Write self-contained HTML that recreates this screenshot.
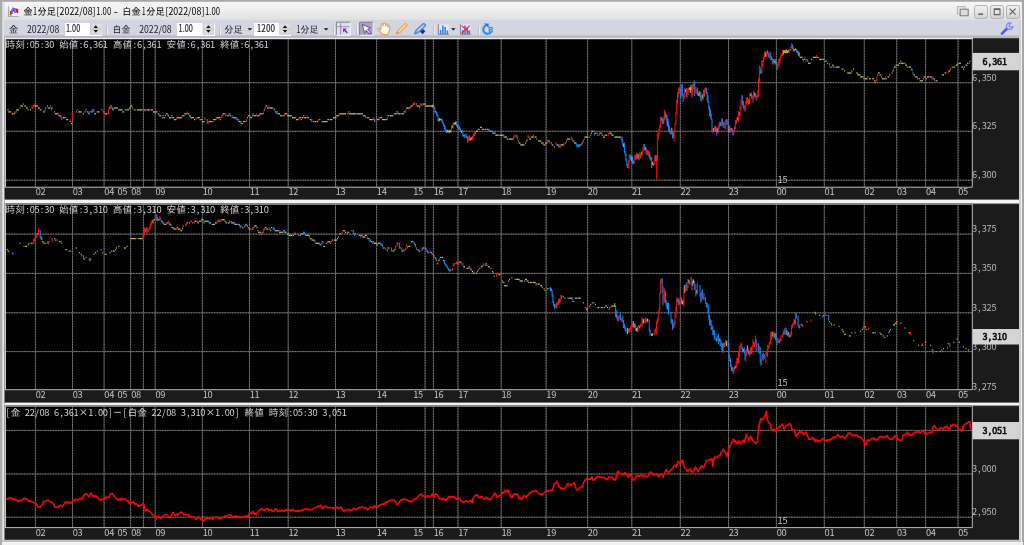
<!DOCTYPE html>
<html lang="ja"><head><meta charset="utf-8"><title>金1分足[2022/08]1.00 - 白金1分足[2022/08]1.00</title>
<style>
html,body{margin:0;padding:0;}
body{width:1024px;height:545px;overflow:hidden;position:relative;background:#f0f0f0;font-family:"Liberation Sans","IPAGothic","Noto Sans CJK JP",sans-serif;}
.abs{position:absolute;}
#frame-top{left:0;top:0;width:1024px;height:2.2px;background:linear-gradient(#a9a9ad,#a9a9ad 60%,#d8d8d8);}
#frame-left{left:0;top:0;width:1.8px;height:545px;background:#ababab;}
#frame-left2{left:1.8px;top:2px;width:2.8px;height:543px;background:linear-gradient(90deg,#c8c8c8,#e6e6e6 40%,#e2e2e2);}
#titlebar{left:1.8px;top:2.2px;width:1020px;height:18px;background:linear-gradient(#f6f6f6,#efefef 45%,#dfdfdf);}
#toolbar{left:4.4px;top:20.4px;width:1014.6px;height:15px;background:#d3d6e1;}
#toolbar-line{left:4.4px;top:35.2px;width:1014.6px;height:2.9px;background:linear-gradient(#c6c9d4,#a9acb8);}
.inp{position:absolute;top:22.8px;height:12.8px;background:#fff;}
.sep{position:absolute;top:25.6px;width:1.1px;height:9.2px;background:#f0f1f6;border-left:0.6px solid #bcc0cc;}
#frame-right{left:1019px;top:20px;width:2.2px;height:522px;background:#cfcfcf;}
#frame-right2{left:1021.2px;top:2px;width:1.4px;height:543px;background:#f2f2f2;}
#frame-right3{left:1022.4px;top:0;width:1.6px;height:545px;background:#a6a6a6;}
#frame-bottom{left:1.8px;top:539.8px;width:1019.6px;height:2.6px;background:#c2c2c2;}
#frame-bottom2{left:1.8px;top:542.4px;width:1020.8px;height:2.6px;background:#f2f2f2;}
.wbtn{position:absolute;top:4.7px;width:11.8px;height:12.4px;border:0.9px solid #b2b2b2;border-radius:2.4px;background:linear-gradient(#f0f0f0,#e4e4e4 50%,#d0d0d0);box-sizing:content-box;}

</style></head><body>
<div class="abs" id="frame-top"></div>
<div class="abs" id="titlebar"></div>
<div class="abs" id="frame-left"></div>
<div class="abs" id="frame-left2"></div>
<div class="abs" id="toolbar"></div>
<div class="abs" id="toolbar-line"></div>
<div class="inp" style="left:64.5px;width:37.5px"></div>
<div class="sep" style="left:105.8px"></div>
<div class="inp" style="left:177px;width:37.5px"></div>
<div class="sep" style="left:218.6px"></div>
<div class="inp" style="left:254px;width:37px"></div>
<div class="sep" style="left:333.2px"></div>
<div class="sep" style="left:355.8px"></div>
<div class="sep" style="left:433.2px"></div>
<div class="sep" style="left:478.2px"></div>
<div class="abs" id="frame-right"></div>
<div class="abs" id="frame-right2"></div>
<div class="abs" id="frame-right3"></div>
<div class="abs" id="frame-bottom"></div>
<div class="abs" id="frame-bottom2"></div>
<div class="wbtn" style="left:974px"></div>
<div class="wbtn" style="left:990px"></div>
<div class="wbtn" style="left:1005.8px"></div>
<!--ICONS-->

<svg width="1024" height="545" viewBox="0 0 1024 545" style="position:absolute;left:0;top:0;will-change:transform" font-family="IPAGothic, 'Liberation Mono', monospace" font-size="9.75">
<rect x="4.5" y="38.2" width="1014.5" height="501.6" fill="#1b1b1b"/>
<rect x="6.0" y="38.0" width="966.0" height="149.1" fill="#000"/>
<rect x="4.6" y="38.0" width="1.4" height="149.6" fill="#c6c6c6"/>
<path d="M35.4 38.0V187.2M72.5 38.0V187.2M104.1 38.0V187.2M130.6 38.0V187.2M143.4 38.0V187.2M155.2 38.0V187.2M202.4 38.0V187.2M249.5 38.0V187.2M288.2 38.0V187.2M335.5 38.0V187.2M376.6 38.0V187.2M425.1 38.0V187.2M433.4 38.0V187.2M458.0 38.0V187.2M501.2 38.0V187.2M546.1 38.0V187.2M587.6 38.0V187.2M631.8 38.0V187.2M680.3 38.0V187.2M728.5 38.0V187.2M776.4 38.0V187.2M824.3 38.0V187.2M864.3 38.0V187.2M896.7 38.0V187.2M925.6 38.0V187.2M958.0 38.0V187.2M6.0 82.7H972.0M6.0 131.3H972.0M6.0 180.2H972.0" stroke="#525252" stroke-width="0.85" fill="none"/>
<path d="M35.4 38.0V187.2M72.5 38.0V187.2M104.1 38.0V187.2M130.6 38.0V187.2M143.4 38.0V187.2M155.2 38.0V187.2M202.4 38.0V187.2M249.5 38.0V187.2M288.2 38.0V187.2M335.5 38.0V187.2M376.6 38.0V187.2M425.1 38.0V187.2M433.4 38.0V187.2M458.0 38.0V187.2M501.2 38.0V187.2M546.1 38.0V187.2M587.6 38.0V187.2M631.8 38.0V187.2M680.3 38.0V187.2M728.5 38.0V187.2M776.4 38.0V187.2M824.3 38.0V187.2M864.3 38.0V187.2M896.7 38.0V187.2M925.6 38.0V187.2M958.0 38.0V187.2M6.0 82.7H972.0M6.0 131.3H972.0M6.0 180.2H972.0" stroke="#868686" stroke-width="0.85" stroke-dasharray="1.3 1.3" fill="none"/>
<path d="M8.0 109.3v1.2M8.8 111.3v1.2M9.6 111.3v1.2M10.4 111.3v1.2M12.0 113.2v1.2M12.8 113.2v1.2M14.4 113.2v1.2M16.0 111.3v1.2M16.8 109.3v1.2M17.6 109.3v1.2M18.5 109.3v1.2M20.1 107.4v1.2M20.9 105.4v1.2M21.7 105.4v1.2M22.5 105.4v1.2M23.3 103.5v1.2M24.9 105.4v1.2M25.7 105.4v1.2M26.5 107.4v1.2M27.3 107.4v1.2M28.1 109.3v1.2M30.5 109.3v1.2M32.9 107.4v1.2M33.7 105.4v1.2M35.3 105.4v1.2M36.1 105.4v1.2M36.9 105.4v1.2M37.7 105.4v1.2M38.5 107.4v1.2M39.3 107.4v1.2M40.2 109.3v1.2M41.0 109.3v1.2M43.4 111.3v1.2M44.2 111.3v1.2M45.0 109.3v1.2M45.8 107.4v1.2M47.4 105.4v1.2M48.2 107.4v1.2M49.0 107.4v1.2M49.8 107.4v1.2M50.6 105.4v1.2M52.2 107.4v1.2M54.6 111.3v1.2M55.4 113.2v1.2M56.2 113.2v1.2M57.0 113.2v1.2M57.8 113.2v1.2M59.4 115.1v1.2M60.2 115.1v1.2M63.5 117.1v1.2M64.3 117.1v1.2M65.9 117.1v1.2M66.7 119.0v1.2M67.5 119.0v1.2M70.7 121.0v1.2M71.5 122.9v1.2M76.3 111.3v1.2M77.1 109.3v1.2M78.7 111.3v1.2M79.5 111.3v1.2M80.3 111.3v1.2M81.1 111.3v1.2M83.5 113.2v1.2M85.2 111.3v1.2M86.0 109.3v1.2M87.6 111.3v1.2M89.2 113.2v1.2M90.0 111.3v1.2M91.6 111.3v1.2M93.2 109.3v1.2M94.8 113.2v1.2M95.6 113.2v1.2M97.2 111.3v1.2M98.0 111.3v1.2M98.8 111.3v1.2M102.0 109.3v1.2M103.6 111.3v1.2M105.2 113.2v1.2M106.1 113.2v1.2M106.9 113.2v1.2M109.3 107.4v1.2M110.1 107.4v1.2M110.9 105.4v1.2M113.3 109.3v1.2M114.1 107.4v1.2M114.9 107.4v1.2M115.7 107.4v1.2M116.5 107.4v1.2M117.3 107.4v1.2M118.9 109.3v1.2M119.7 109.3v1.2M120.5 109.3v1.2M121.3 109.3v1.2M122.1 109.3v1.2M122.9 111.3v1.2M123.7 111.3v1.2M125.3 109.3v1.2M126.9 109.3v1.2M127.8 109.3v1.2M128.6 109.3v1.2M129.4 107.4v1.2M130.2 107.4v1.2M131.0 105.4v1.2M131.8 105.4v1.2M132.6 107.4v1.2M134.2 109.3v1.2M135.0 109.3v1.2M137.4 109.3v1.2M138.2 109.3v1.2M139.0 109.3v1.2M139.8 109.3v1.2M140.6 109.3v1.2M141.4 109.3v1.2M143.0 109.3v1.2M144.6 109.3v1.2M145.4 109.3v1.2M147.0 109.3v1.2M147.8 109.3v1.2M148.6 109.3v1.2M149.4 109.3v1.2M151.1 109.3v1.2M151.9 109.3v1.2M152.7 109.3v1.2M153.5 111.3v1.2M154.3 111.3v1.2M155.1 111.3v1.2M155.9 111.3v1.2M156.7 111.3v1.2M158.3 113.2v1.2M159.9 115.1v1.2M160.7 115.1v1.2M162.3 117.1v1.2M163.1 115.1v1.2M163.9 117.1v1.2M164.7 117.1v1.2M165.5 115.1v1.2M166.3 113.2v1.2M167.1 113.2v1.2M168.7 115.1v1.2M169.5 117.1v1.2M170.3 117.1v1.2M171.1 117.1v1.2M172.0 115.1v1.2M172.8 117.1v1.2M173.6 117.1v1.2M174.4 119.0v1.2M175.2 119.0v1.2M176.0 119.0v1.2M177.6 117.1v1.2M178.4 117.1v1.2M179.2 117.1v1.2M180.0 117.1v1.2M180.8 117.1v1.2M181.6 117.1v1.2M182.4 115.1v1.2M183.2 115.1v1.2M184.0 115.1v1.2M184.8 113.2v1.2M185.6 113.2v1.2M186.4 113.2v1.2M188.0 113.2v1.2M188.8 113.2v1.2M189.6 115.1v1.2M191.2 117.1v1.2M192.0 117.1v1.2M192.8 117.1v1.2M193.7 117.1v1.2M194.5 119.0v1.2M197.7 117.1v1.2M198.5 117.1v1.2M199.3 117.1v1.2M200.1 119.0v1.2M201.7 119.0v1.2M202.5 121.0v1.2M203.3 121.0v1.2M204.1 121.0v1.2M208.9 121.0v1.2M209.7 121.0v1.2M210.5 121.0v1.2M211.3 121.0v1.2M212.9 121.0v1.2M213.7 119.0v1.2M214.5 119.0v1.2M215.4 119.0v1.2M217.0 117.1v1.2M217.8 117.1v1.2M218.6 117.1v1.2M219.4 117.1v1.2M220.2 119.0v1.2M221.0 117.1v1.2M223.4 113.2v1.2M224.2 113.2v1.2M227.4 115.1v1.2M228.2 115.1v1.2M229.0 113.2v1.2M230.6 115.1v1.2M233.0 117.1v1.2M233.8 117.1v1.2M234.6 117.1v1.2M235.4 117.1v1.2M237.9 119.0v1.2M239.5 121.0v1.2M240.3 121.0v1.2M241.9 122.9v1.2M242.7 122.9v1.2M243.5 121.0v1.2M244.3 121.0v1.2M245.1 121.0v1.2M247.5 117.1v1.2M248.3 115.1v1.2M249.1 115.1v1.2M250.7 117.1v1.2M251.5 117.1v1.2M252.3 115.1v1.2M253.1 113.2v1.2M253.9 115.1v1.2M254.7 115.1v1.2M255.5 115.1v1.2M257.1 115.1v1.2M257.9 115.1v1.2M258.7 115.1v1.2M260.4 113.2v1.2M261.2 113.2v1.2M262.0 113.2v1.2M262.8 113.2v1.2M264.4 109.3v1.2M265.2 107.4v1.2M266.0 105.4v1.2M266.8 105.4v1.2M267.6 107.4v1.2M268.4 107.4v1.2M270.0 107.4v1.2M270.8 107.4v1.2M271.6 107.4v1.2M272.4 107.4v1.2M274.8 109.3v1.2M275.6 111.3v1.2M277.2 111.3v1.2M278.0 113.2v1.2M278.8 113.2v1.2M279.6 113.2v1.2M280.4 115.1v1.2M281.3 115.1v1.2M282.1 115.1v1.2M283.7 115.1v1.2M285.3 113.2v1.2M286.1 113.2v1.2M286.9 113.2v1.2M287.7 115.1v1.2M288.5 115.1v1.2M289.3 115.1v1.2M290.1 115.1v1.2M290.9 115.1v1.2M291.7 115.1v1.2M292.5 117.1v1.2M293.3 117.1v1.2M294.1 117.1v1.2M294.9 117.1v1.2M295.7 117.1v1.2M296.5 119.0v1.2M297.3 119.0v1.2M298.1 119.0v1.2M299.7 117.1v1.2M300.5 117.1v1.2M301.3 119.0v1.2M302.1 117.1v1.2M303.0 117.1v1.2M303.8 115.1v1.2M304.6 117.1v1.2M305.4 117.1v1.2M306.2 117.1v1.2M307.8 117.1v1.2M308.6 117.1v1.2M310.2 119.0v1.2M311.0 119.0v1.2M313.4 121.0v1.2M315.0 121.0v1.2M315.8 121.0v1.2M317.4 121.0v1.2M319.8 119.0v1.2M322.2 121.0v1.2M323.0 121.0v1.2M323.8 121.0v1.2M324.6 121.0v1.2M325.5 121.0v1.2M326.3 121.0v1.2M327.1 121.0v1.2M327.9 119.0v1.2M328.7 119.0v1.2M330.3 119.0v1.2M331.1 119.0v1.2M331.9 119.0v1.2M333.5 117.1v1.2M334.3 117.1v1.2M335.1 117.1v1.2M335.9 117.1v1.2M336.7 115.1v1.2M337.5 115.1v1.2M338.3 115.1v1.2M339.9 113.2v1.2M340.7 113.2v1.2M341.5 113.2v1.2M342.3 113.2v1.2M343.1 113.2v1.2M343.9 113.2v1.2M344.7 113.2v1.2M345.5 113.2v1.2M348.0 113.2v1.2M348.8 111.3v1.2M349.6 113.2v1.2M350.4 113.2v1.2M351.2 113.2v1.2M352.0 113.2v1.2M352.8 113.2v1.2M353.6 113.2v1.2M354.4 113.2v1.2M355.2 113.2v1.2M356.0 113.2v1.2M357.6 113.2v1.2M358.4 113.2v1.2M359.2 113.2v1.2M360.0 113.2v1.2M360.8 113.2v1.2M361.6 113.2v1.2M362.4 113.2v1.2M363.2 115.1v1.2M364.0 115.1v1.2M364.8 115.1v1.2M367.2 117.1v1.2M368.0 117.1v1.2M368.9 117.1v1.2M369.7 119.0v1.2M370.5 119.0v1.2M371.3 119.0v1.2M372.1 119.0v1.2M372.9 119.0v1.2M376.9 119.0v1.2M377.7 119.0v1.2M378.5 119.0v1.2M380.1 117.1v1.2M380.9 117.1v1.2M381.7 117.1v1.2M382.5 119.0v1.2M383.3 119.0v1.2M384.1 119.0v1.2M384.9 119.0v1.2M385.7 119.0v1.2M386.5 119.0v1.2M388.1 115.1v1.2M388.9 115.1v1.2M390.6 115.1v1.2M391.4 115.1v1.2M392.2 115.1v1.2M393.0 115.1v1.2M394.6 113.2v1.2M395.4 113.2v1.2M396.2 113.2v1.2M397.0 111.3v1.2M398.6 113.2v1.2M399.4 113.2v1.2M400.2 113.2v1.2M401.8 113.2v1.2M402.6 113.2v1.2M403.4 113.2v1.2M404.2 111.3v1.2M405.0 111.3v1.2M406.6 107.4v1.2M407.4 107.4v1.2M408.2 107.4v1.2M409.0 107.4v1.2M409.8 107.4v1.2M411.4 105.4v1.2M412.2 105.4v1.2M413.1 103.5v1.2M413.9 103.5v1.2M416.3 103.5v1.2M417.1 105.4v1.2M417.9 105.4v1.2M418.7 105.4v1.2M421.1 103.5v1.2M423.5 103.5v1.2M424.3 103.5v1.2M425.1 103.5v1.2M425.9 105.4v1.2M426.7 105.4v1.2M427.5 105.4v1.2M428.3 105.4v1.2M429.1 105.4v1.2M429.9 105.4v1.2M430.7 105.4v1.2M431.5 105.4v1.2M432.3 104.8v2.6M433.1 104.7v2.3M435.6 110.8v1.6M438.8 118.9v2.3M439.6 118.1v2.7M440.4 119.0v1.3M441.2 118.5v1.9M446.8 130.3v2.6M447.6 129.9v2.0M448.4 130.7v1.3M449.2 129.9v3.5M450.0 130.6v1.9M450.8 129.9v2.4M452.4 125.1v2.9M454.0 122.4v2.6M454.8 122.9v1.7M455.6 121.6v3.0M457.3 124.8v2.6M458.9 126.8v2.4M461.3 130.7v2.3M462.1 130.5v1.3M463.7 134.5v1.8M466.9 136.4v2.0M470.1 138.2v2.6M470.9 137.4v2.6M471.7 137.7v1.9M474.1 133.6v2.3M475.7 132.4v1.4M476.5 130.7v1.2M477.3 130.7v1.2M478.2 128.8v1.2M479.0 128.8v1.2M480.6 126.8v1.2M481.4 126.8v1.2M482.2 128.8v1.2M483.0 128.8v1.2M483.8 128.8v1.2M485.4 128.8v1.2M487.0 128.8v1.2M487.8 128.8v1.2M490.2 130.7v1.2M491.0 130.7v1.2M491.8 130.7v1.2M493.4 132.6v1.2M494.2 132.6v1.2M495.0 132.6v1.2M495.8 134.6v1.2M496.6 134.6v1.2M497.4 134.6v1.2M498.2 134.6v1.2M499.8 134.6v1.2M500.7 134.6v1.2M501.5 134.6v1.2M502.3 134.6v1.2M503.1 134.6v1.2M504.7 136.5v1.2M505.5 136.5v1.2M506.3 136.5v1.2M507.1 138.5v1.2M507.9 138.5v1.2M509.5 138.5v1.2M510.3 138.5v1.2M511.1 138.5v1.2M511.9 138.5v1.2M512.7 138.5v1.2M518.3 140.4v1.2M519.1 142.4v1.2M519.9 142.4v1.2M520.7 144.3v1.2M521.5 144.3v1.2M522.4 144.3v1.2M523.2 144.3v1.2M524.0 144.3v1.2M525.6 142.4v1.2M526.4 140.4v1.2M528.8 136.5v1.2M529.6 138.5v1.2M530.4 138.5v1.2M531.2 136.5v1.2M532.0 136.5v1.2M532.8 136.5v1.2M535.2 136.5v1.2M536.0 136.5v1.2M536.8 138.5v1.2M538.4 140.4v1.2M539.2 140.4v1.2M540.0 140.4v1.2M540.8 140.4v1.2M541.6 142.4v1.2M542.4 142.4v1.2M544.1 144.3v1.2M544.9 144.3v1.2M545.7 142.4v1.2M546.5 142.4v1.2M548.1 140.4v1.2M548.9 140.4v1.2M551.3 142.4v1.2M552.1 144.3v1.2M552.9 144.3v1.2M554.5 146.3v1.2M556.9 144.3v1.2M557.7 144.3v1.2M560.1 146.3v1.2M560.9 144.3v1.2M561.7 144.3v1.2M562.5 144.3v1.2M563.3 144.3v1.2M565.8 142.4v1.2M566.6 140.4v1.2M567.4 138.5v1.2M568.2 138.5v1.2M569.0 138.5v1.2M569.8 138.5v1.2M572.2 138.5v1.2M573.0 140.4v1.2M573.8 140.4v1.2M574.6 142.4v1.2M575.4 142.4v1.2M580.2 144.3v1.2M581.0 144.3v1.2M582.6 142.4v1.2M583.4 140.4v1.2M584.2 138.5v1.2M585.0 136.5v1.2M585.8 136.5v1.2M586.6 136.5v1.2M587.4 136.5v1.2M589.1 136.5v1.2M590.7 134.6v1.2M591.5 132.6v1.2M592.3 130.7v1.2M593.1 130.7v1.2M595.5 132.6v1.2M597.1 132.6v1.2M597.9 134.6v1.2M600.3 132.6v1.2M601.1 132.6v1.2M602.7 134.6v1.2M603.5 136.5v1.2M604.3 136.5v1.2M605.1 134.6v1.2M605.9 134.6v1.2M606.7 134.6v1.2M609.1 132.6v1.2M610.0 132.6v1.2M610.8 132.6v1.2M612.4 134.6v1.2M613.2 134.6v1.2M614.8 136.5v1.2M615.6 136.5v1.2M616.4 136.5v1.2M617.2 136.5v1.2M618.0 136.5v1.2M618.8 136.5v1.2M619.6 136.5v1.2M620.4 136.5v1.2M621.2 138.5v1.2M623.6 143.3v3.8M630.0 154.4v4.2M631.7 156.5v4.5M633.3 160.7v2.9M638.1 153.8v4.9M641.3 151.9v3.4M645.3 147.0v3.3M650.9 157.3v2.3M652.5 161.8v3.5M653.4 163.5v1.7M655.8 155.5v5.5M663.0 118.6v5.4M667.8 118.4v8.1M671.8 127.8v6.5M685.5 89.2v2.9M689.5 87.5v2.4M690.3 87.2v5.6M691.1 84.8v5.5M698.4 93.5v2.2M699.2 91.3v4.5M702.4 94.5v4.6M704.0 89.8v7.0M713.6 128.1v3.5M716.0 127.5v4.1M717.6 128.4v3.9M720.1 122.0v3.7M728.9 125.8v6.1M731.3 128.4v2.0M736.1 120.2v3.2M737.7 117.2v3.0M739.3 112.3v3.4M749.0 98.6v5.5M750.6 93.8v2.1M754.6 92.5v4.1M761.0 69.7v4.1M765.1 51.6v5.2M765.9 53.8v2.9M773.9 59.0v4.5M774.7 60.8v2.1M781.9 54.8v1.3M783.5 50.4v4.1M784.3 50.1v2.9M785.2 50.5v2.5M786.0 49.7v3.9M786.8 49.7v3.0M787.6 50.9v2.2M788.4 50.2v2.1M790.0 49.0v1.2M794.0 49.0v2.5M794.8 49.1v1.5M795.6 48.5v1.9M797.2 50.7v2.1M798.8 51.8v4.1M800.4 56.8v1.2M801.2 56.8v1.2M802.0 56.8v1.2M802.8 58.8v1.2M804.4 58.8v1.2M808.5 62.7v1.2M809.3 62.7v1.2M810.1 62.7v1.2M811.7 58.8v1.2M813.3 56.8v1.2M814.1 56.8v1.2M814.9 56.8v1.2M815.7 56.8v1.2M817.3 56.8v1.2M818.1 56.8v1.2M819.7 58.8v1.2M820.5 58.8v1.2M821.3 58.8v1.2M822.9 58.8v1.2M823.7 58.8v1.2M825.3 60.7v1.2M826.1 60.7v1.2M827.7 62.7v1.2M830.2 66.5v1.2M831.8 66.5v1.2M832.6 64.6v1.2M835.0 66.5v1.2M836.6 66.5v1.2M837.4 66.5v1.2M838.2 66.5v1.2M839.0 66.5v1.2M842.2 68.5v1.2M843.0 68.5v1.2M844.6 70.4v1.2M847.8 72.4v1.2M848.6 72.4v1.2M849.4 72.4v1.2M850.2 72.4v1.2M851.1 72.4v1.2M851.9 70.4v1.2M853.5 68.5v1.2M856.7 72.4v1.2M858.3 74.3v1.2M859.1 74.3v1.2M859.9 74.3v1.2M860.7 76.3v1.2M861.5 76.3v1.2M862.3 76.3v1.2M863.1 76.3v1.2M863.9 78.2v1.2M865.5 78.2v1.2M866.3 78.2v1.2M867.1 78.2v1.2M867.9 76.3v1.2M869.5 78.2v1.2M870.3 78.2v1.2M872.8 78.2v1.2M873.6 78.2v1.2M874.4 80.2v1.2M875.2 82.1v1.2M876.0 80.2v1.2M877.6 74.3v1.2M878.4 72.4v1.2M879.2 72.4v1.2M880.0 74.3v1.2M880.8 74.3v1.2M881.6 76.3v1.2M882.4 78.2v1.2M883.2 78.2v1.2M884.0 78.2v1.2M884.8 78.2v1.2M886.4 78.2v1.2M888.0 76.3v1.2M888.8 76.3v1.2M889.6 74.3v1.2M892.0 72.4v1.2M892.8 70.4v1.2M894.5 66.5v1.2M895.3 66.5v1.2M896.1 64.6v1.2M897.7 64.6v1.2M898.5 64.6v1.2M899.3 62.7v1.2M900.1 62.7v1.2M900.9 60.7v1.2M901.7 62.7v1.2M902.5 62.7v1.2M903.3 62.7v1.2M904.9 62.7v1.2M905.7 64.6v1.2M906.5 64.6v1.2M907.3 66.5v1.2M908.9 66.5v1.2M909.7 66.5v1.2M910.5 66.5v1.2M911.3 68.5v1.2M912.9 72.4v1.2M913.7 74.3v1.2M914.5 74.3v1.2M915.3 76.3v1.2M916.2 76.3v1.2M917.0 76.3v1.2M917.8 78.2v1.2M919.4 78.2v1.2M920.2 80.2v1.2M921.0 80.2v1.2M921.8 80.2v1.2M922.6 80.2v1.2M923.4 78.2v1.2M924.2 76.3v1.2M925.0 76.3v1.2M926.6 78.2v1.2M927.4 76.3v1.2M928.2 76.3v1.2M929.0 76.3v1.2M930.6 76.3v1.2M931.4 76.3v1.2M932.2 78.2v1.2M933.8 78.2v1.2M936.2 80.2v1.2M937.0 80.2v1.2M942.7 74.3v1.2M943.5 74.3v1.2M945.1 72.4v1.2M945.9 72.4v1.2M949.1 70.4v1.2M949.9 70.4v1.2M950.7 68.5v1.2M952.3 66.5v1.2M953.9 66.5v1.2M954.7 66.5v1.2M956.3 64.6v1.2M957.1 64.6v1.2M957.9 62.7v1.2M959.5 62.7v1.2M960.4 62.7v1.2M962.0 66.5v1.2M962.8 66.5v1.2M963.6 68.5v1.2M964.4 66.5v1.2M966.0 64.6v1.2M966.8 64.6v1.2M967.6 62.7v1.2M969.2 62.7v1.2M970.0 60.7v1.2" stroke="#cac466" stroke-width="1" fill="none"/>
<path d="M51.4 107.5v2.9M61.0 115.2v2.9M61.8 117.2v2.9M88.4 111.4v2.9M92.4 109.4v2.9M94.0 109.4v2.9M111.7 105.5v2.9M112.5 107.5v2.9M159.1 113.3v2.9M167.9 113.3v2.9M190.4 115.2v2.9M207.3 119.1v4.9M225.8 113.3v2.9M229.8 113.3v2.9M232.2 115.2v2.9M236.2 117.2v2.9M238.7 119.1v2.9M241.1 121.1v2.9M249.9 115.2v2.9M259.6 113.3v2.9M274.0 107.5v2.9M276.4 111.4v2.9M311.8 119.1v2.9M365.6 115.2v2.9M374.5 119.1v2.9M397.8 111.4v2.9M419.5 105.5v2.9M421.9 103.6v2.9M433.9 105.1v4.0M434.8 106.2v7.1M436.4 111.3v3.6M437.2 112.5v4.0M438.0 114.8v7.0M442.0 119.1v3.5M442.8 120.3v3.8M443.6 122.6v3.7M444.4 124.3v5.2M445.2 125.8v5.3M446.0 128.7v3.8M456.5 121.3v4.8M458.1 124.2v4.3M459.7 126.2v3.9M460.5 128.4v3.4M462.9 130.2v6.5M464.5 134.4v3.3M466.1 133.5v4.2M467.7 136.4v6.3M469.3 135.4v5.0M488.6 128.9v2.9M492.6 130.8v2.9M503.9 134.7v2.9M516.7 134.7v2.9M533.6 134.7v2.9M543.2 142.5v2.9M549.7 140.5v2.9M558.5 144.4v2.9M576.2 142.5v2.9M577.0 144.4v2.9M577.8 144.4v2.9M578.6 144.4v2.9M579.4 144.4v2.9M594.7 132.7v2.9M611.6 132.7v2.9M622.0 136.3v5.9M622.8 139.9v5.7M624.4 142.5v11.0M625.2 151.1v5.3M626.0 153.5v7.9M626.8 159.1v6.8M627.6 163.6v4.4M630.8 155.5v4.9M632.5 156.5v7.7M635.7 154.9v4.5M637.3 153.8v4.1M638.9 156.0v4.5M644.5 144.2v5.9M646.1 147.6v6.9M647.7 150.0v5.3M649.3 151.8v6.6M650.1 154.8v5.9M651.7 157.4v10.6M656.6 155.1v4.5M661.4 117.0v4.2M662.2 118.1v5.0M665.4 111.8v6.2M666.2 113.8v6.8M667.0 114.9v10.3M668.6 121.5v9.3M669.4 125.9v7.0M670.2 130.2v4.2M672.6 130.7v7.7M673.4 132.4v5.8M679.9 87.4v6.2M680.7 88.9v9.7M682.3 84.1v11.6M683.1 93.4v8.8M686.3 88.1v8.9M691.9 86.9v10.8M694.3 80.3v15.7M695.9 87.0v6.4M697.6 87.8v7.6M700.0 93.0v4.5M700.8 91.7v9.5M706.4 88.0v6.0M707.2 91.9v9.4M708.0 94.8v8.3M708.8 100.9v8.4M709.6 106.3v9.7M710.4 109.4v9.1M711.2 113.7v6.6M712.0 118.9v13.3M715.2 125.5v5.0M716.8 127.1v9.0M720.9 122.0v4.4M722.5 118.5v7.1M723.3 122.1v5.8M724.9 122.8v5.6M726.5 119.1v5.3M728.1 120.7v9.7M729.7 125.5v7.3M732.1 128.0v4.1M732.9 129.7v5.8M742.6 95.2v10.4M743.4 101.0v7.0M744.2 105.1v5.4M747.4 97.0v5.9M751.4 92.6v5.8M752.2 95.5v3.4M755.4 93.1v4.2M756.2 95.6v5.2M760.2 66.9v6.1M767.5 50.2v4.4M768.3 52.3v4.7M769.1 53.7v4.7M770.7 52.6v7.3M771.5 56.2v4.0M772.3 58.1v5.7M775.5 59.1v5.4M776.3 60.6v5.1M777.1 63.7v6.4M792.4 44.2v5.0M793.2 46.4v4.8M796.4 49.1v3.0M798.0 50.5v4.2M799.6 52.5v4.5M803.6 58.9v2.9M806.0 58.9v2.9M807.7 58.9v2.9M829.4 62.8v2.9M833.4 64.7v2.9M857.5 72.5v2.9M912.1 68.6v2.9M934.6 78.3v2.9" stroke="#1088ff" stroke-width="1" fill="none"/>
<path d="M15.2 111.4v2.9M32.1 105.5v2.9M34.5 103.6v2.9M58.6 113.3v2.9M69.9 119.1v2.9M72.3 113.3v2.9M104.4 111.4v2.9M108.5 109.4v4.9M143.8 109.4v2.9M176.8 117.2v2.9M187.2 111.4v2.9M196.1 117.2v2.9M204.9 117.2v2.9M208.1 121.1v2.9M216.2 117.2v2.9M221.8 115.2v2.9M222.6 113.3v2.9M237.0 117.2v2.9M246.7 119.1v2.9M256.3 113.3v2.9M263.6 111.4v2.9M269.2 105.5v2.9M284.5 113.3v2.9M298.9 117.2v2.9M307.0 115.2v2.9M318.2 119.1v2.9M339.1 113.3v2.9M373.7 117.2v2.9M376.1 119.1v2.9M379.3 117.2v2.9M387.3 117.2v2.9M405.8 109.4v2.9M410.6 105.5v2.9M414.7 101.6v2.9M420.3 103.6v2.9M451.6 125.6v7.2M453.2 122.5v6.2M465.3 134.6v3.2M468.5 136.6v5.1M472.5 135.8v4.2M473.3 134.3v4.4M474.9 131.9v4.5M489.4 128.9v2.9M513.5 136.6v2.9M514.3 134.7v2.9M515.9 134.7v2.9M517.5 136.6v2.9M527.2 138.6v2.9M528.0 134.7v2.9M547.3 140.5v2.9M556.1 142.5v2.9M559.3 144.4v2.9M564.1 142.5v2.9M571.4 136.6v2.9M581.8 142.5v2.9M599.5 132.7v2.9M601.9 132.7v2.9M608.3 132.7v2.9M628.4 160.3v8.2M629.2 155.1v8.7M634.1 157.6v6.4M634.9 155.0v4.6M636.5 152.9v6.5M639.7 152.7v6.7M640.5 153.6v4.8M642.1 150.2v5.2M642.9 147.4v4.2M643.7 144.2v5.3M646.9 149.2v5.0M648.5 150.9v5.2M654.2 160.1v5.0M655.0 154.8v8.8M657.4 134.0v27.1M658.2 130.3v10.0M659.0 128.6v7.1M659.8 124.8v7.2M660.6 116.7v11.3M663.8 116.3v6.9M664.6 109.9v10.5M671.0 129.1v5.4M674.2 129.9v11.4M675.0 122.4v10.1M675.9 111.8v12.7M676.7 99.7v14.9M677.5 92.1v11.6M678.3 88.6v9.0M679.1 86.7v7.1M681.5 84.2v11.6M683.9 95.5v3.7M684.7 88.2v10.2M687.1 90.1v8.2M687.9 87.8v7.2M688.7 87.5v4.7M692.7 84.0v10.6M693.5 82.9v6.2M695.1 86.5v5.4M696.7 89.6v4.1M701.6 95.1v6.5M703.2 92.9v7.5M704.8 88.0v7.3M705.6 87.0v4.7M712.8 128.5v4.5M714.4 126.5v4.3M718.4 124.6v8.6M719.3 121.6v7.2M721.7 118.0v8.4M724.1 121.5v4.6M725.7 119.8v9.8M727.3 119.2v6.0M730.5 128.0v4.3M733.7 130.4v5.2M734.5 126.5v5.4M735.3 120.4v8.6M736.9 117.9v4.5M738.5 110.9v10.6M740.1 106.0v9.3M741.0 99.5v10.3M741.8 95.4v8.6M745.0 105.7v6.1M745.8 100.6v9.7M746.6 97.4v7.5M748.2 98.6v6.8M749.8 92.6v8.6M753.0 95.6v7.1M753.8 90.5v9.0M757.0 94.7v4.2M757.8 90.5v6.9M758.6 78.3v19.1M759.4 65.4v18.3M761.8 60.3v12.9M762.6 60.5v6.8M763.5 56.6v5.3M764.3 52.5v6.6M766.7 51.0v5.9M769.9 51.5v6.7M773.1 60.4v4.8M777.9 62.0v6.3M778.7 59.2v7.5M779.5 58.5v4.8M780.3 56.3v4.8M781.1 52.9v5.4M782.7 49.6v6.4M789.2 49.0v3.9M790.8 46.4v4.5M791.6 43.5v4.9M805.2 56.9v2.9M816.5 55.0v2.9M876.8 76.4v4.9M885.6 76.4v2.9M893.6 68.6v2.9M933.0 76.4v2.9M948.3 70.5v2.9M656.7 155.0v24.0M72.3 112.5v8.0M110.0 105.5v4.0" stroke="#ff1010" stroke-width="1" fill="none"/>
<text y="195.1" fill="#c4c4c4" font-size="9.75" xml:space="preserve" ><tspan x="38.24 43.11" text-anchor="middle" font-size="9.3" font-family="'Noto Sans CJK JP','Liberation Sans',sans-serif">02</tspan></text>
<text y="195.1" fill="#c4c4c4" font-size="9.75" xml:space="preserve" ><tspan x="75.34 80.21" text-anchor="middle" font-size="9.3" font-family="'Noto Sans CJK JP','Liberation Sans',sans-serif">03</tspan></text>
<text y="195.1" fill="#c4c4c4" font-size="9.75" xml:space="preserve" ><tspan x="106.94 111.81" text-anchor="middle" font-size="9.3" font-family="'Noto Sans CJK JP','Liberation Sans',sans-serif">04</tspan></text>
<text y="195.1" fill="#c4c4c4" font-size="9.75" xml:space="preserve" ><tspan x="158.09 162.96" text-anchor="middle" font-size="9.3" font-family="'Noto Sans CJK JP','Liberation Sans',sans-serif">09</tspan></text>
<text y="195.1" fill="#c4c4c4" font-size="9.75" xml:space="preserve" ><tspan x="205.24 210.11" text-anchor="middle" font-size="9.3" font-family="'Noto Sans CJK JP','Liberation Sans',sans-serif">10</tspan></text>
<text y="195.1" fill="#c4c4c4" font-size="9.75" xml:space="preserve" ><tspan x="252.34 257.21" text-anchor="middle" font-size="9.3" font-family="'Noto Sans CJK JP','Liberation Sans',sans-serif">11</tspan></text>
<text y="195.1" fill="#c4c4c4" font-size="9.75" xml:space="preserve" ><tspan x="291.09 295.96" text-anchor="middle" font-size="9.3" font-family="'Noto Sans CJK JP','Liberation Sans',sans-serif">12</tspan></text>
<text y="195.1" fill="#c4c4c4" font-size="9.75" xml:space="preserve" ><tspan x="338.34 343.21" text-anchor="middle" font-size="9.3" font-family="'Noto Sans CJK JP','Liberation Sans',sans-serif">13</tspan></text>
<text y="195.1" fill="#c4c4c4" font-size="9.75" xml:space="preserve" ><tspan x="379.44 384.31" text-anchor="middle" font-size="9.3" font-family="'Noto Sans CJK JP','Liberation Sans',sans-serif">14</tspan></text>
<text y="195.1" fill="#c4c4c4" font-size="9.75" xml:space="preserve" ><tspan x="436.24 441.11" text-anchor="middle" font-size="9.3" font-family="'Noto Sans CJK JP','Liberation Sans',sans-serif">16</tspan></text>
<text y="195.1" fill="#c4c4c4" font-size="9.75" xml:space="preserve" ><tspan x="460.84 465.71" text-anchor="middle" font-size="9.3" font-family="'Noto Sans CJK JP','Liberation Sans',sans-serif">17</tspan></text>
<text y="195.1" fill="#c4c4c4" font-size="9.75" xml:space="preserve" ><tspan x="504.04 508.91" text-anchor="middle" font-size="9.3" font-family="'Noto Sans CJK JP','Liberation Sans',sans-serif">18</tspan></text>
<text y="195.1" fill="#c4c4c4" font-size="9.75" xml:space="preserve" ><tspan x="548.94 553.81" text-anchor="middle" font-size="9.3" font-family="'Noto Sans CJK JP','Liberation Sans',sans-serif">19</tspan></text>
<text y="195.1" fill="#c4c4c4" font-size="9.75" xml:space="preserve" ><tspan x="590.44 595.31" text-anchor="middle" font-size="9.3" font-family="'Noto Sans CJK JP','Liberation Sans',sans-serif">20</tspan></text>
<text y="195.1" fill="#c4c4c4" font-size="9.75" xml:space="preserve" ><tspan x="634.59 639.46" text-anchor="middle" font-size="9.3" font-family="'Noto Sans CJK JP','Liberation Sans',sans-serif">21</tspan></text>
<text y="195.1" fill="#c4c4c4" font-size="9.75" xml:space="preserve" ><tspan x="683.14 688.01" text-anchor="middle" font-size="9.3" font-family="'Noto Sans CJK JP','Liberation Sans',sans-serif">22</tspan></text>
<text y="195.1" fill="#c4c4c4" font-size="9.75" xml:space="preserve" ><tspan x="731.34 736.21" text-anchor="middle" font-size="9.3" font-family="'Noto Sans CJK JP','Liberation Sans',sans-serif">23</tspan></text>
<text y="195.1" fill="#c4c4c4" font-size="9.75" xml:space="preserve" ><tspan x="779.24 784.11" text-anchor="middle" font-size="9.3" font-family="'Noto Sans CJK JP','Liberation Sans',sans-serif">00</tspan></text>
<text y="195.1" fill="#c4c4c4" font-size="9.75" xml:space="preserve" ><tspan x="827.14 832.01" text-anchor="middle" font-size="9.3" font-family="'Noto Sans CJK JP','Liberation Sans',sans-serif">01</tspan></text>
<text y="195.1" fill="#c4c4c4" font-size="9.75" xml:space="preserve" ><tspan x="867.14 872.01" text-anchor="middle" font-size="9.3" font-family="'Noto Sans CJK JP','Liberation Sans',sans-serif">02</tspan></text>
<text y="195.1" fill="#c4c4c4" font-size="9.75" xml:space="preserve" ><tspan x="899.54 904.41" text-anchor="middle" font-size="9.3" font-family="'Noto Sans CJK JP','Liberation Sans',sans-serif">03</tspan></text>
<text y="195.1" fill="#c4c4c4" font-size="9.75" xml:space="preserve" ><tspan x="928.49 933.36" text-anchor="middle" font-size="9.3" font-family="'Noto Sans CJK JP','Liberation Sans',sans-serif">04</tspan></text>
<text y="195.1" fill="#c4c4c4" font-size="9.75" xml:space="preserve" ><tspan x="960.84 965.71" text-anchor="middle" font-size="9.3" font-family="'Noto Sans CJK JP','Liberation Sans',sans-serif">05</tspan></text>
<text y="195.1" fill="#c4c4c4" font-size="9.75" xml:space="preserve" ><tspan x="120.04 124.91" text-anchor="middle" font-size="9.3" font-family="'Noto Sans CJK JP','Liberation Sans',sans-serif">05</tspan></text>
<text y="195.1" fill="#c4c4c4" font-size="9.75" xml:space="preserve" ><tspan x="133.84 138.71" text-anchor="middle" font-size="9.3" font-family="'Noto Sans CJK JP','Liberation Sans',sans-serif">08</tspan></text>
<text y="195.1" fill="#c4c4c4" font-size="9.75" xml:space="preserve" ><tspan x="415.74 420.61" text-anchor="middle" font-size="9.3" font-family="'Noto Sans CJK JP','Liberation Sans',sans-serif">15</tspan></text>
<text y="183.4" fill="#c4c4c4" font-size="9.75" xml:space="preserve" ><tspan x="780.14 785.01" text-anchor="middle" font-size="9.3" font-family="'Noto Sans CJK JP','Liberation Sans',sans-serif">15</tspan></text>
<text y="80.6" fill="#b8b8b8" font-size="9.75" xml:space="preserve" ><tspan x="974.54 979.41 984.29 989.16 994.04" text-anchor="middle" font-size="9.3" font-family="'Noto Sans CJK JP','Liberation Sans',sans-serif">6,350</tspan></text>
<text y="129.2" fill="#b8b8b8" font-size="9.75" xml:space="preserve" ><tspan x="974.54 979.41 984.29 989.16 994.04" text-anchor="middle" font-size="9.3" font-family="'Noto Sans CJK JP','Liberation Sans',sans-serif">6,325</tspan></text>
<text y="178.1" fill="#b8b8b8" font-size="9.75" xml:space="preserve" ><tspan x="974.54 979.41 984.29 989.16 994.04" text-anchor="middle" font-size="9.3" font-family="'Noto Sans CJK JP','Liberation Sans',sans-serif">6,300</tspan></text>
<path d="M972.3 38.5V187.2H6.0" stroke="#b8b8b8" stroke-width="1" fill="none"/>
<path d="M4.6 38.5H972.8" stroke="#ececec" stroke-width="1.3" fill="none"/>
<rect x="972.6" y="52.9" width="46.4" height="17.4" fill="#d4d4d4"/>
<text y="64.6" fill="#000" font-size="9.75" xml:space="preserve" stroke="#000" stroke-width="0.5"><tspan x="984.94 989.81 994.69 999.56 1004.44" text-anchor="middle" font-size="9.0" font-family="'Noto Sans CJK JP','Liberation Sans',sans-serif">6,361</tspan></text>
<text y="48.1" fill="#d0d0d0" font-size="9.75" xml:space="preserve" ><tspan x="5.50">時刻</tspan><tspan x="27.44 32.31 37.19 42.06 46.94 51.81 56.69" text-anchor="middle" font-size="9.3" font-family="'Noto Sans CJK JP','Liberation Sans',sans-serif">:05:30 </tspan><tspan x="59.12">始値</tspan><tspan x="81.06 85.94 90.81 95.69 100.56 105.44 110.31" text-anchor="middle" font-size="9.3" font-family="'Noto Sans CJK JP','Liberation Sans',sans-serif">:6,361 </tspan><tspan x="112.75">高値</tspan><tspan x="134.69 139.56 144.44 149.31 154.19 159.06 163.94" text-anchor="middle" font-size="9.3" font-family="'Noto Sans CJK JP','Liberation Sans',sans-serif">:6,361 </tspan><tspan x="166.38">安値</tspan><tspan x="188.31 193.19 198.06 202.94 207.81 212.69 217.56" text-anchor="middle" font-size="9.3" font-family="'Noto Sans CJK JP','Liberation Sans',sans-serif">:6,361 </tspan><tspan x="220.00">終値</tspan><tspan x="241.94 246.81 251.69 256.56 261.44 266.31" text-anchor="middle" font-size="9.3" font-family="'Noto Sans CJK JP','Liberation Sans',sans-serif">:6,361</tspan></text>
<rect x="4.5" y="199.6" width="1014.5" height="4.0" fill="#f4f4f4"/>
<rect x="4.5" y="203.2" width="1014.5" height="0.9" fill="#9a9a9a"/>
<rect x="6.0" y="203.8" width="966.0" height="185.9" fill="#000"/>
<rect x="4.6" y="203.8" width="1.4" height="186.4" fill="#c6c6c6"/>
<path d="M35.4 203.8V389.7M72.5 203.8V389.7M104.1 203.8V389.7M130.6 203.8V389.7M143.4 203.8V389.7M155.2 203.8V389.7M202.4 203.8V389.7M249.5 203.8V389.7M288.2 203.8V389.7M335.5 203.8V389.7M376.6 203.8V389.7M425.1 203.8V389.7M433.4 203.8V389.7M458.0 203.8V389.7M501.2 203.8V389.7M546.1 203.8V389.7M587.6 203.8V389.7M631.8 203.8V389.7M680.3 203.8V389.7M728.5 203.8V389.7M776.4 203.8V389.7M824.3 203.8V389.7M864.3 203.8V389.7M896.7 203.8V389.7M925.6 203.8V389.7M958.0 203.8V389.7M6.0 234.1H972.0M6.0 273.4H972.0M6.0 312.8H972.0M6.0 351.6H972.0" stroke="#525252" stroke-width="0.85" fill="none"/>
<path d="M35.4 203.8V389.7M72.5 203.8V389.7M104.1 203.8V389.7M130.6 203.8V389.7M143.4 203.8V389.7M155.2 203.8V389.7M202.4 203.8V389.7M249.5 203.8V389.7M288.2 203.8V389.7M335.5 203.8V389.7M376.6 203.8V389.7M425.1 203.8V389.7M433.4 203.8V389.7M458.0 203.8V389.7M501.2 203.8V389.7M546.1 203.8V389.7M587.6 203.8V389.7M631.8 203.8V389.7M680.3 203.8V389.7M728.5 203.8V389.7M776.4 203.8V389.7M824.3 203.8V389.7M864.3 203.8V389.7M896.7 203.8V389.7M925.6 203.8V389.7M958.0 203.8V389.7M6.0 234.1H972.0M6.0 273.4H972.0M6.0 312.8H972.0M6.0 351.6H972.0" stroke="#868686" stroke-width="0.85" stroke-dasharray="1.3 1.3" fill="none"/>
<path d="M7.2 249.0v1.2M8.0 250.5v1.2M8.8 250.5v1.2M20.1 242.7v1.2M24.1 245.8v1.2M25.7 245.8v1.2M26.5 245.8v1.2M28.1 244.2v1.2M28.9 242.7v1.2M31.3 242.7v1.2M32.1 242.7v1.2M37.7 233.1v1.5M41.8 237.3v2.4M42.6 241.1v1.2M44.2 242.7v1.2M45.8 242.7v1.2M48.2 242.7v1.2M49.0 241.1v1.2M54.6 238.0v1.2M55.4 239.5v1.2M57.0 239.5v1.2M59.4 241.1v1.2M61.0 241.1v1.2M61.8 242.7v1.2M65.9 249.0v1.2M66.7 249.0v1.2M69.1 250.5v1.2M70.7 250.5v1.2M76.3 247.4v1.2M79.5 252.1v1.2M81.1 253.7v1.2M81.9 255.2v1.2M84.4 258.4v1.2M86.0 256.8v1.2M89.2 258.4v1.2M90.0 259.9v1.2M90.8 258.4v1.2M94.0 253.7v1.2M95.6 252.1v1.2M97.2 250.5v1.2M101.2 249.0v1.2M102.8 252.1v1.2M105.2 253.7v1.2M106.1 253.7v1.2M110.1 252.1v1.2M111.7 250.5v1.2M113.3 250.5v1.2M114.1 250.5v1.2M115.7 249.0v1.2M116.5 247.4v1.2M118.9 245.8v1.2M124.5 247.4v1.2M125.3 247.4v1.2M126.9 245.8v1.2M131.0 238.0v1.2M131.8 238.0v1.2M132.6 238.0v1.2M133.4 238.0v1.2M134.2 238.0v1.2M135.0 238.0v1.2M135.8 238.0v1.2M138.2 238.0v1.2M139.8 238.0v1.2M140.6 238.0v1.2M141.4 238.0v1.2M142.2 238.0v1.2M152.7 220.0v2.8M154.3 218.8v1.5M158.3 218.7v1.7M159.1 219.2v1.1M161.5 220.7v1.2M163.1 222.3v1.2M164.7 223.8v1.2M165.5 223.8v1.2M167.1 222.3v1.2M167.9 222.3v1.2M170.3 223.8v1.2M172.0 227.0v1.2M172.8 227.0v1.2M174.4 228.5v1.2M175.2 228.5v1.2M176.0 228.5v1.2M177.6 227.0v1.2M178.4 228.5v1.2M179.2 228.5v1.2M180.0 228.5v1.2M180.8 230.1v1.2M181.6 230.1v1.2M183.2 225.4v1.2M187.2 222.3v1.2M189.6 222.3v1.2M191.2 220.7v1.2M192.8 222.3v1.2M195.3 220.7v1.2M196.1 220.7v1.2M198.5 222.3v1.2M199.3 220.7v1.2M200.1 220.7v1.2M200.9 220.7v1.2M201.7 219.1v1.2M202.5 219.1v1.2M204.1 222.3v1.2M204.9 220.7v1.2M205.7 220.7v1.2M206.5 220.7v1.2M207.3 220.7v1.2M208.1 220.7v1.2M209.7 222.3v1.2M210.5 222.3v1.2M212.1 223.8v1.2M212.9 223.8v1.2M213.7 223.8v1.2M214.5 223.8v1.2M215.4 222.3v1.2M216.2 222.3v1.2M218.6 220.7v1.2M220.2 220.7v1.2M221.8 219.1v1.2M222.6 219.1v1.2M223.4 219.1v1.2M224.2 219.1v1.2M225.0 220.7v1.2M226.6 222.3v1.2M228.2 222.3v1.2M229.0 222.3v1.2M229.8 220.7v1.2M232.2 222.3v1.2M233.0 222.3v1.2M233.8 222.3v1.2M235.4 223.8v1.2M236.2 223.8v1.2M237.0 223.8v1.2M238.7 223.8v1.2M241.1 225.4v1.2M242.7 227.0v1.2M245.1 225.4v1.2M245.9 223.8v1.2M247.5 225.4v1.2M248.3 227.0v1.2M249.1 228.5v1.2M250.7 228.5v1.2M252.3 228.5v1.2M253.9 227.0v1.2M254.7 225.4v1.2M255.5 225.4v1.2M256.3 225.4v1.2M257.1 227.0v1.2M257.9 230.1v1.2M258.7 231.7v1.2M259.6 231.7v1.2M260.4 231.7v1.2M261.2 233.3v1.2M262.8 231.7v1.2M264.4 228.5v1.2M265.2 227.0v1.2M266.0 227.0v1.2M266.8 228.5v1.2M267.6 228.5v1.2M270.0 228.5v1.2M270.8 230.1v1.2M271.6 227.0v1.2M275.6 230.1v1.2M276.4 230.1v1.2M277.2 230.1v1.2M278.0 230.1v1.2M278.8 230.1v1.2M279.6 231.7v1.2M280.4 231.7v1.2M281.3 231.7v1.2M282.1 231.7v1.2M282.9 231.7v1.2M283.7 230.1v1.2M285.3 231.7v1.2M286.1 231.7v1.2M287.7 233.3v1.2M288.5 233.3v1.2M289.3 234.8v1.2M290.1 234.8v1.2M290.9 234.8v1.2M291.7 234.8v1.2M293.3 234.8v1.2M294.1 233.3v1.2M295.7 233.3v1.2M298.9 234.8v1.2M301.3 233.3v1.2M302.1 233.3v1.2M303.0 233.3v1.2M303.8 231.7v1.2M306.2 234.8v1.2M307.0 234.8v1.2M307.8 234.8v1.2M308.6 234.8v1.2M310.2 238.0v1.2M311.0 238.0v1.2M312.6 239.5v1.2M313.4 239.5v1.2M315.8 242.7v1.2M316.6 242.7v1.2M317.4 242.7v1.2M318.2 242.7v1.2M319.0 242.7v1.2M320.6 244.2v1.2M322.2 241.1v1.2M323.8 245.8v1.2M324.6 245.8v1.2M326.3 242.7v1.2M327.9 241.1v1.2M328.7 241.1v1.2M329.5 241.1v1.2M330.3 242.7v1.2M331.1 241.1v1.2M332.7 239.5v1.2M334.3 239.5v1.2M335.1 239.5v1.2M335.9 239.5v1.2M336.7 239.5v1.2M337.5 238.0v1.2M338.3 236.4v1.2M339.9 233.3v1.2M340.7 233.3v1.2M343.1 230.1v1.2M343.9 230.1v1.2M344.7 230.1v1.2M345.5 231.7v1.2M348.0 231.7v1.2M348.8 231.7v1.2M352.0 230.1v1.2M355.2 233.3v1.2M359.2 234.8v1.2M360.0 234.8v1.2M361.6 234.8v1.2M363.2 236.4v1.2M364.0 236.4v1.2M364.8 236.4v1.2M365.6 234.8v1.2M366.4 234.8v1.2M368.0 238.0v1.2M368.9 238.0v1.2M369.7 239.5v1.2M371.3 241.1v1.2M372.1 241.1v1.2M372.9 242.7v1.2M373.7 241.1v1.2M374.5 242.7v1.2M375.3 242.7v1.2M376.1 242.7v1.2M376.9 244.2v1.2M378.5 242.7v1.2M379.3 242.7v1.2M380.1 242.7v1.2M381.7 244.2v1.2M383.3 247.4v1.2M384.1 247.4v1.2M388.1 247.4v1.2M388.9 247.4v1.2M393.0 250.5v1.2M393.8 250.5v1.2M394.6 249.0v1.2M397.8 242.7v1.2M400.2 247.4v1.2M402.6 250.5v1.2M408.2 245.8v1.2M409.0 245.8v1.2M409.8 245.8v1.2M411.4 241.1v1.2M412.2 241.1v1.2M416.3 247.4v1.2M417.1 249.0v1.2M419.5 250.5v1.2M423.5 247.4v1.2M425.1 247.4v1.2M428.3 252.1v1.2M431.5 252.1v1.2M432.3 253.7v1.2M433.9 255.2v1.2M434.8 256.8v1.2M437.2 263.1v1.2M438.8 259.9v1.2M440.4 256.8v1.2M442.0 256.8v1.2M442.8 256.8v1.2M443.6 259.9v1.2M446.0 264.6v1.2M449.2 269.4v1.2M450.8 269.4v1.2M453.2 264.6v1.2M454.8 263.1v1.2M458.1 263.1v1.2M459.7 261.5v1.2M460.5 261.5v1.2M463.7 266.2v1.2M464.5 266.2v1.2M466.9 267.8v1.2M467.7 267.8v1.2M469.3 266.2v1.2M470.1 267.8v1.2M471.7 269.4v1.2M472.5 270.9v1.2M473.3 272.5v1.2M474.1 272.5v1.2M476.5 272.5v1.2M477.3 270.9v1.2M478.2 269.4v1.2M479.8 267.8v1.2M481.4 266.2v1.2M482.2 266.2v1.2M483.0 264.6v1.2M485.4 264.6v1.2M486.2 263.1v1.2M487.0 264.6v1.2M488.6 266.2v1.2M489.4 266.2v1.2M491.0 267.8v1.2M492.6 270.9v1.2M493.4 272.5v1.2M494.2 275.6v1.2M499.0 274.1v1.2M499.8 274.1v1.2M502.3 280.4v1.2M503.1 281.9v1.2M503.9 281.9v1.2M504.7 285.1v1.2M505.5 285.1v1.2M506.3 285.1v1.2M507.1 285.1v1.2M508.7 280.4v1.2M509.5 278.8v1.2M511.9 277.2v1.2M515.1 278.8v1.2M516.7 278.8v1.2M517.5 278.8v1.2M518.3 278.8v1.2M519.1 278.8v1.2M519.9 280.4v1.2M520.7 280.4v1.2M521.5 280.4v1.2M522.4 280.4v1.2M524.8 280.4v1.2M525.6 278.8v1.2M526.4 278.8v1.2M527.2 280.4v1.2M528.0 280.4v1.2M528.8 281.9v1.2M530.4 281.9v1.2M531.2 281.9v1.2M532.0 281.9v1.2M533.6 281.9v1.2M534.4 281.9v1.2M535.2 281.9v1.2M536.0 283.5v1.2M536.8 283.5v1.2M538.4 283.5v1.2M539.2 283.5v1.2M540.8 285.1v1.2M541.6 285.1v1.2M542.4 286.6v1.2M544.1 288.2v1.2M544.9 289.8v1.2M547.3 288.2v1.2M548.9 288.2v1.2M551.3 288.5v2.4M556.1 303.6v4.7M563.3 296.1v1.2M564.9 297.6v1.2M568.2 297.6v1.2M569.8 297.6v1.2M570.6 297.6v1.2M571.4 297.6v1.2M573.0 300.8v1.2M573.8 300.8v1.2M575.4 297.6v1.2M576.2 297.6v1.2M577.0 297.6v1.2M578.6 297.6v1.2M579.4 297.6v1.2M580.2 297.6v1.2M583.4 302.3v1.2M585.8 307.0v1.2M586.6 308.6v1.2M587.4 308.6v1.2M589.9 305.5v1.2M590.7 303.9v1.2M592.3 302.3v1.2M593.9 302.3v1.2M595.5 303.9v1.2M597.9 307.0v1.2M598.7 307.0v1.2M601.1 307.0v1.2M601.9 307.0v1.2M602.7 307.0v1.2M604.3 307.0v1.2M605.9 305.5v1.2M606.7 305.5v1.2M607.5 307.0v1.2M609.1 308.6v1.2M610.0 307.0v1.2M611.6 305.5v1.2M612.4 305.5v1.2M613.2 305.5v1.2M614.0 305.5v1.2M614.8 303.1v3.6M627.6 328.1v6.2M633.3 321.1v6.3M634.9 323.5v4.0M636.5 328.2v2.9M637.3 327.5v4.3M639.7 325.5v2.6M642.9 319.0v4.7M643.7 319.2v3.8M646.9 319.3v1.6M647.7 318.4v3.7M651.7 333.5v2.5M652.5 333.5v2.2M667.8 302.8v6.8M679.1 301.0v2.8M682.3 301.0v3.0M683.1 299.6v5.0M684.7 285.1v7.8M688.7 279.6v3.8M692.7 281.1v5.1M693.5 279.4v3.9M696.7 289.9v3.2M712.0 327.1v2.9M716.8 337.9v3.6M719.3 338.5v3.0M724.1 343.1v4.0M726.5 340.9v5.2M732.1 367.0v3.8M735.3 365.7v2.7M743.4 348.9v2.6M747.4 345.5v5.2M749.0 350.7v3.4M772.3 331.7v4.7M774.7 333.4v3.9M786.8 330.0v4.7M788.4 332.2v3.1M790.0 334.9v2.3M794.8 319.8v3.7M801.2 324.3v1.2M802.0 324.3v1.2M806.9 321.2v1.2M814.9 311.8v1.2M815.7 313.3v1.2M819.7 314.9v1.2M823.7 314.9v1.2M826.9 314.9v1.2M829.4 321.2v1.2M831.0 322.7v1.2M831.8 324.3v1.2M834.2 324.3v1.2M839.0 325.9v1.2M842.2 329.0v1.2M843.0 330.6v1.2M844.6 333.7v1.2M845.4 333.7v1.2M849.4 335.3v1.2M850.2 335.3v1.2M851.9 332.2v1.2M855.1 332.2v1.2M860.7 330.6v1.2M862.3 329.0v1.2M863.1 327.4v1.2M864.7 325.9v1.2M866.3 329.0v1.2M872.8 332.2v1.2M873.6 332.2v1.2M875.2 332.2v1.2M880.0 332.2v1.2M880.8 333.7v1.2M881.6 333.7v1.2M883.2 335.3v1.2M884.8 336.9v1.2M887.2 335.3v1.2M888.8 332.2v1.2M889.6 330.6v1.2M890.4 329.0v1.2M893.6 324.3v1.2M894.5 324.3v1.2M895.3 322.7v1.2M896.1 322.7v1.2M896.9 321.2v1.2M900.9 322.7v1.2M904.9 327.4v1.2M908.9 332.2v1.2M909.7 332.2v1.2M913.7 340.0v1.2M918.6 344.7v1.2M921.8 344.7v1.2M925.8 341.6v1.2M930.6 344.7v1.2M932.2 349.4v1.2M936.2 351.0v1.2M940.3 351.0v1.2M941.9 349.4v1.2M943.5 347.9v1.2M948.3 343.1v1.2M953.9 341.6v1.2M957.1 338.4v1.2M959.5 341.6v1.2M963.6 346.3v1.2M966.0 347.9v1.2M968.4 349.4v1.2" stroke="#cac466" stroke-width="1" fill="none"/>
<path d="M12.8 252.2v2.6M36.1 233.8v3.8M40.2 230.1v8.1M41.0 235.8v3.7M43.4 241.2v2.6M83.5 255.3v4.1M145.4 228.1v4.0M147.0 227.2v5.6M156.7 214.0v6.7M157.5 216.9v4.2M160.7 217.7v2.6M162.3 220.8v2.6M163.9 222.4v2.6M169.5 222.4v2.6M171.1 223.9v2.6M173.6 227.1v2.6M182.4 227.1v2.6M197.7 220.8v2.6M203.3 219.2v2.6M208.9 220.8v2.6M225.8 220.8v2.6M231.4 220.8v2.6M234.6 222.4v2.6M239.5 223.9v2.6M240.3 225.5v2.6M246.7 223.9v2.6M273.2 227.1v2.6M274.0 227.1v2.6M274.8 228.6v2.6M284.5 230.2v2.6M300.5 233.4v2.6M304.6 231.8v2.6M305.4 233.4v2.6M309.4 234.9v2.6M311.8 238.1v2.6M314.2 239.6v2.6M319.8 242.8v2.6M323.0 241.2v2.6M347.2 231.8v2.6M353.6 230.2v4.1M354.4 233.4v2.6M360.8 234.9v2.6M367.2 236.5v2.6M370.5 239.6v2.6M380.9 242.8v2.6M382.5 244.3v2.6M387.3 249.1v2.6M391.4 247.5v4.1M399.4 242.8v5.7M401.8 247.5v4.1M405.8 247.5v2.6M407.4 245.9v2.6M413.9 241.2v2.6M414.7 242.8v2.6M415.5 244.3v2.6M418.7 249.1v2.6M422.7 247.5v2.6M425.9 247.5v2.6M426.7 249.1v2.6M427.5 250.6v2.6M430.7 250.6v2.6M435.6 256.9v2.6M436.4 258.5v2.6M444.4 260.0v4.1M445.2 263.2v2.6M446.8 264.8v2.6M447.6 266.3v2.6M448.4 267.9v2.6M450.0 269.5v2.6M457.3 261.6v2.6M462.9 263.2v2.6M470.9 267.9v2.6M550.5 287.1v4.4M552.1 289.9v7.2M552.9 293.7v9.3M553.7 300.7v5.5M554.5 303.9v4.7M559.3 298.5v4.9M561.7 294.9v4.0M572.2 297.7v2.6M615.6 305.2v11.8M616.4 310.4v7.5M617.2 314.5v6.0M618.0 316.9v4.4M620.4 312.9v7.1M621.2 318.0v3.6M622.8 315.7v6.9M623.6 320.0v8.1M624.4 323.7v5.1M625.2 326.2v4.8M626.0 328.4v4.4M629.2 327.8v4.9M634.1 324.3v4.2M635.7 325.1v5.9M645.3 317.5v5.7M649.3 319.7v12.2M650.1 329.8v5.8M655.8 328.5v3.6M662.2 278.1v14.8M663.0 286.6v18.8M665.4 290.9v12.6M666.2 299.7v7.7M667.0 303.7v5.6M668.6 302.9v11.8M671.0 311.8v10.7M671.8 319.1v5.4M672.6 319.2v10.7M673.4 323.3v4.3M677.5 298.8v3.0M678.3 298.2v6.8M681.5 297.7v6.7M686.3 282.5v7.9M691.1 276.7v8.5M694.3 280.9v9.1M695.9 283.9v12.7M700.0 285.0v11.8M700.8 293.0v9.3M702.4 289.3v9.8M704.0 293.1v7.4M705.6 297.1v6.8M706.4 302.4v5.2M707.2 302.9v4.2M708.0 304.5v9.3M708.8 306.9v12.9M709.6 315.2v10.1M710.4 319.1v6.7M711.2 320.3v9.7M712.8 325.3v9.9M713.6 329.8v5.1M714.4 330.5v9.2M716.0 333.4v7.6M718.4 333.7v10.6M720.1 338.3v7.9M720.9 340.1v6.3M721.7 342.7v7.5M722.5 343.2v8.7M728.1 340.2v7.3M728.9 342.7v14.8M729.7 354.6v6.9M730.5 358.3v8.5M731.3 364.5v6.7M732.9 368.0v4.6M737.7 357.5v5.9M741.8 343.7v5.8M742.6 347.8v4.6M744.2 347.2v6.5M745.0 350.8v9.5M748.2 348.8v5.7M749.8 351.0v5.6M751.4 347.0v6.8M753.8 342.0v4.2M756.2 339.2v11.8M758.6 343.4v9.4M760.2 347.0v16.0M761.0 358.7v7.1M762.6 353.9v5.6M764.3 354.1v4.6M773.1 333.0v5.5M775.5 333.1v7.1M776.3 332.8v7.0M777.1 338.2v7.0M778.7 340.1v3.0M784.3 328.4v6.3M786.0 327.7v7.3M787.6 331.8v4.6M789.2 333.3v4.4M796.4 313.3v5.4M798.0 315.8v10.0M798.8 324.1v3.5M799.6 325.6v3.0M822.9 315.0v2.6M828.6 315.0v5.7M843.8 330.7v2.6M865.5 326.0v2.6M933.0 349.5v4.1M949.9 343.2v4.1" stroke="#1088ff" stroke-width="1" fill="none"/>
<path d="M33.7 238.9v5.6M34.5 237.9v3.3M35.3 232.8v7.1M36.9 232.9v4.9M38.5 228.1v6.8M47.4 241.2v2.6M52.2 238.1v4.1M143.0 234.1v6.4M143.8 230.8v6.2M144.6 227.3v6.0M146.2 227.9v4.0M147.8 230.1v3.0M148.6 228.6v3.1M149.4 226.8v2.9M150.3 223.6v5.0M151.1 221.7v4.8M151.9 219.9v4.8M153.5 219.2v4.3M155.9 214.0v6.7M159.9 215.9v4.7M166.3 222.4v2.6M168.7 220.8v2.6M176.8 227.1v2.6M185.6 223.9v2.6M186.4 222.4v2.6M194.5 220.8v2.6M217.0 220.8v2.6M217.8 219.2v2.6M219.4 219.2v2.6M221.0 219.2v2.6M244.3 225.5v2.6M253.1 227.1v2.6M262.0 231.8v2.6M263.6 228.6v4.1M269.2 227.1v2.6M294.9 231.8v2.6M315.0 239.6v2.6M321.4 242.8v2.6M327.1 241.2v2.6M331.9 239.6v2.6M342.3 231.8v2.6M362.4 234.9v2.6M377.7 242.8v2.6M385.7 247.5v2.6M395.4 245.9v4.1M397.0 242.8v4.1M403.4 249.1v2.6M404.2 249.1v2.6M406.6 244.3v2.6M421.9 247.5v4.1M429.1 250.6v2.6M433.1 252.2v2.6M438.0 261.6v2.6M439.6 258.5v2.6M452.4 267.9v2.6M454.0 263.2v2.6M456.5 261.6v2.6M458.9 261.6v2.6M461.3 261.6v2.6M468.5 266.3v2.6M483.8 263.2v2.6M496.6 272.6v4.1M556.9 302.2v5.8M557.7 301.5v3.5M558.5 299.0v5.7M560.1 299.2v3.0M560.9 294.9v6.0M589.1 305.6v2.6M618.8 315.2v6.2M619.6 314.7v4.0M628.4 328.8v3.3M630.0 328.1v3.7M630.8 325.6v5.2M631.7 325.4v4.1M632.5 322.8v4.3M638.1 326.2v4.9M638.9 325.0v4.4M640.5 324.3v3.0M641.3 322.4v3.8M642.1 317.1v9.0M646.1 318.6v5.2M654.2 331.6v3.4M655.0 328.9v5.5M656.6 320.8v13.5M657.4 318.3v5.7M658.2 311.0v10.3M659.0 308.2v5.7M659.8 292.5v18.1M660.6 279.2v14.8M661.4 278.7v5.0M663.8 294.3v6.4M664.6 288.5v14.0M674.2 320.8v7.5M675.0 313.0v11.2M675.9 306.6v11.1M676.7 297.6v14.2M679.9 297.8v9.0M680.7 294.6v10.1M683.9 287.2v19.7M685.5 284.8v7.2M687.1 285.3v5.7M687.9 278.9v9.2M689.5 280.1v4.6M691.9 278.6v11.9M697.6 282.3v12.2M701.6 290.9v11.2M703.2 294.4v5.6M717.6 335.6v5.3M723.3 342.4v10.9M724.9 342.6v4.1M725.7 339.7v4.7M733.7 367.3v6.8M734.5 366.5v3.6M736.1 361.6v7.5M736.9 357.9v9.5M738.5 351.1v12.5M739.3 346.2v11.3M740.1 345.2v5.3M741.0 342.1v5.9M745.8 349.6v12.0M746.6 348.5v7.5M750.6 347.6v6.8M752.2 344.9v8.0M753.0 339.4v8.6M754.6 342.2v5.0M755.4 335.6v8.7M757.0 342.9v7.5M759.4 345.9v8.4M761.8 355.4v9.7M763.5 352.8v8.0M765.9 352.8v10.3M766.7 351.3v4.2M767.5 345.4v11.6M768.3 344.7v4.6M769.1 342.6v6.0M769.9 341.5v2.9M770.7 331.7v12.6M771.5 332.9v6.8M773.9 331.2v6.8M777.9 337.8v4.9M779.5 339.4v4.1M780.3 338.0v3.8M781.1 334.8v6.4M782.7 333.3v3.9M783.5 330.5v4.8M785.2 328.5v5.2M790.8 331.6v5.2M791.6 325.3v10.0M792.4 323.5v4.4M793.2 322.6v3.4M794.0 318.9v6.1M795.6 311.8v12.9M802.8 324.4v2.6M810.9 319.7v2.6M825.3 313.4v2.6M868.7 327.6v2.6M910.5 332.3v2.6M922.6 343.2v2.6M947.5 346.4v2.6M864.0 321.5v6.5" stroke="#ff1010" stroke-width="1" fill="none"/>
<text y="397.6" fill="#c4c4c4" font-size="9.75" xml:space="preserve" ><tspan x="38.24 43.11" text-anchor="middle" font-size="9.3" font-family="'Noto Sans CJK JP','Liberation Sans',sans-serif">02</tspan></text>
<text y="397.6" fill="#c4c4c4" font-size="9.75" xml:space="preserve" ><tspan x="75.34 80.21" text-anchor="middle" font-size="9.3" font-family="'Noto Sans CJK JP','Liberation Sans',sans-serif">03</tspan></text>
<text y="397.6" fill="#c4c4c4" font-size="9.75" xml:space="preserve" ><tspan x="106.94 111.81" text-anchor="middle" font-size="9.3" font-family="'Noto Sans CJK JP','Liberation Sans',sans-serif">04</tspan></text>
<text y="397.6" fill="#c4c4c4" font-size="9.75" xml:space="preserve" ><tspan x="158.09 162.96" text-anchor="middle" font-size="9.3" font-family="'Noto Sans CJK JP','Liberation Sans',sans-serif">09</tspan></text>
<text y="397.6" fill="#c4c4c4" font-size="9.75" xml:space="preserve" ><tspan x="205.24 210.11" text-anchor="middle" font-size="9.3" font-family="'Noto Sans CJK JP','Liberation Sans',sans-serif">10</tspan></text>
<text y="397.6" fill="#c4c4c4" font-size="9.75" xml:space="preserve" ><tspan x="252.34 257.21" text-anchor="middle" font-size="9.3" font-family="'Noto Sans CJK JP','Liberation Sans',sans-serif">11</tspan></text>
<text y="397.6" fill="#c4c4c4" font-size="9.75" xml:space="preserve" ><tspan x="291.09 295.96" text-anchor="middle" font-size="9.3" font-family="'Noto Sans CJK JP','Liberation Sans',sans-serif">12</tspan></text>
<text y="397.6" fill="#c4c4c4" font-size="9.75" xml:space="preserve" ><tspan x="338.34 343.21" text-anchor="middle" font-size="9.3" font-family="'Noto Sans CJK JP','Liberation Sans',sans-serif">13</tspan></text>
<text y="397.6" fill="#c4c4c4" font-size="9.75" xml:space="preserve" ><tspan x="379.44 384.31" text-anchor="middle" font-size="9.3" font-family="'Noto Sans CJK JP','Liberation Sans',sans-serif">14</tspan></text>
<text y="397.6" fill="#c4c4c4" font-size="9.75" xml:space="preserve" ><tspan x="436.24 441.11" text-anchor="middle" font-size="9.3" font-family="'Noto Sans CJK JP','Liberation Sans',sans-serif">16</tspan></text>
<text y="397.6" fill="#c4c4c4" font-size="9.75" xml:space="preserve" ><tspan x="460.84 465.71" text-anchor="middle" font-size="9.3" font-family="'Noto Sans CJK JP','Liberation Sans',sans-serif">17</tspan></text>
<text y="397.6" fill="#c4c4c4" font-size="9.75" xml:space="preserve" ><tspan x="504.04 508.91" text-anchor="middle" font-size="9.3" font-family="'Noto Sans CJK JP','Liberation Sans',sans-serif">18</tspan></text>
<text y="397.6" fill="#c4c4c4" font-size="9.75" xml:space="preserve" ><tspan x="548.94 553.81" text-anchor="middle" font-size="9.3" font-family="'Noto Sans CJK JP','Liberation Sans',sans-serif">19</tspan></text>
<text y="397.6" fill="#c4c4c4" font-size="9.75" xml:space="preserve" ><tspan x="590.44 595.31" text-anchor="middle" font-size="9.3" font-family="'Noto Sans CJK JP','Liberation Sans',sans-serif">20</tspan></text>
<text y="397.6" fill="#c4c4c4" font-size="9.75" xml:space="preserve" ><tspan x="634.59 639.46" text-anchor="middle" font-size="9.3" font-family="'Noto Sans CJK JP','Liberation Sans',sans-serif">21</tspan></text>
<text y="397.6" fill="#c4c4c4" font-size="9.75" xml:space="preserve" ><tspan x="683.14 688.01" text-anchor="middle" font-size="9.3" font-family="'Noto Sans CJK JP','Liberation Sans',sans-serif">22</tspan></text>
<text y="397.6" fill="#c4c4c4" font-size="9.75" xml:space="preserve" ><tspan x="731.34 736.21" text-anchor="middle" font-size="9.3" font-family="'Noto Sans CJK JP','Liberation Sans',sans-serif">23</tspan></text>
<text y="397.6" fill="#c4c4c4" font-size="9.75" xml:space="preserve" ><tspan x="779.24 784.11" text-anchor="middle" font-size="9.3" font-family="'Noto Sans CJK JP','Liberation Sans',sans-serif">00</tspan></text>
<text y="397.6" fill="#c4c4c4" font-size="9.75" xml:space="preserve" ><tspan x="827.14 832.01" text-anchor="middle" font-size="9.3" font-family="'Noto Sans CJK JP','Liberation Sans',sans-serif">01</tspan></text>
<text y="397.6" fill="#c4c4c4" font-size="9.75" xml:space="preserve" ><tspan x="867.14 872.01" text-anchor="middle" font-size="9.3" font-family="'Noto Sans CJK JP','Liberation Sans',sans-serif">02</tspan></text>
<text y="397.6" fill="#c4c4c4" font-size="9.75" xml:space="preserve" ><tspan x="899.54 904.41" text-anchor="middle" font-size="9.3" font-family="'Noto Sans CJK JP','Liberation Sans',sans-serif">03</tspan></text>
<text y="397.6" fill="#c4c4c4" font-size="9.75" xml:space="preserve" ><tspan x="928.49 933.36" text-anchor="middle" font-size="9.3" font-family="'Noto Sans CJK JP','Liberation Sans',sans-serif">04</tspan></text>
<text y="397.6" fill="#c4c4c4" font-size="9.75" xml:space="preserve" ><tspan x="960.84 965.71" text-anchor="middle" font-size="9.3" font-family="'Noto Sans CJK JP','Liberation Sans',sans-serif">05</tspan></text>
<text y="397.6" fill="#c4c4c4" font-size="9.75" xml:space="preserve" ><tspan x="120.04 124.91" text-anchor="middle" font-size="9.3" font-family="'Noto Sans CJK JP','Liberation Sans',sans-serif">05</tspan></text>
<text y="397.6" fill="#c4c4c4" font-size="9.75" xml:space="preserve" ><tspan x="133.84 138.71" text-anchor="middle" font-size="9.3" font-family="'Noto Sans CJK JP','Liberation Sans',sans-serif">08</tspan></text>
<text y="397.6" fill="#c4c4c4" font-size="9.75" xml:space="preserve" ><tspan x="415.74 420.61" text-anchor="middle" font-size="9.3" font-family="'Noto Sans CJK JP','Liberation Sans',sans-serif">15</tspan></text>
<text y="385.9" fill="#c4c4c4" font-size="9.75" xml:space="preserve" ><tspan x="780.14 785.01" text-anchor="middle" font-size="9.3" font-family="'Noto Sans CJK JP','Liberation Sans',sans-serif">15</tspan></text>
<text y="232.0" fill="#b8b8b8" font-size="9.75" xml:space="preserve" ><tspan x="974.54 979.41 984.29 989.16 994.04" text-anchor="middle" font-size="9.3" font-family="'Noto Sans CJK JP','Liberation Sans',sans-serif">3,375</tspan></text>
<text y="271.3" fill="#b8b8b8" font-size="9.75" xml:space="preserve" ><tspan x="974.54 979.41 984.29 989.16 994.04" text-anchor="middle" font-size="9.3" font-family="'Noto Sans CJK JP','Liberation Sans',sans-serif">3,350</tspan></text>
<text y="310.7" fill="#b8b8b8" font-size="9.75" xml:space="preserve" ><tspan x="974.54 979.41 984.29 989.16 994.04" text-anchor="middle" font-size="9.3" font-family="'Noto Sans CJK JP','Liberation Sans',sans-serif">3,325</tspan></text>
<text y="349.5" fill="#b8b8b8" font-size="9.75" xml:space="preserve" ><tspan x="974.54 979.41 984.29 989.16 994.04" text-anchor="middle" font-size="9.3" font-family="'Noto Sans CJK JP','Liberation Sans',sans-serif">3,300</tspan></text>
<text y="389.9" fill="#b8b8b8" font-size="9.75" xml:space="preserve" ><tspan x="974.54 979.41 984.29 989.16 994.04" text-anchor="middle" font-size="9.3" font-family="'Noto Sans CJK JP','Liberation Sans',sans-serif">3,275</tspan></text>
<path d="M972.3 204.3V389.7H6.0" stroke="#b8b8b8" stroke-width="1" fill="none"/>
<path d="M4.6 204.3H972.8" stroke="#a0a0a0" stroke-width="1" fill="none"/>
<rect x="972.6" y="329.0" width="46.4" height="15.5" fill="#d4d4d4"/>
<text y="339.8" fill="#000" font-size="9.75" xml:space="preserve" stroke="#000" stroke-width="0.5"><tspan x="984.94 989.81 994.69 999.56 1004.44" text-anchor="middle" font-size="9.0" font-family="'Noto Sans CJK JP','Liberation Sans',sans-serif">3,310</tspan></text>
<text y="213.4" fill="#d0d0d0" font-size="9.75" xml:space="preserve" ><tspan x="5.50">時刻</tspan><tspan x="27.44 32.31 37.19 42.06 46.94 51.81 56.69" text-anchor="middle" font-size="9.3" font-family="'Noto Sans CJK JP','Liberation Sans',sans-serif">:05:30 </tspan><tspan x="59.12">始値</tspan><tspan x="81.06 85.94 90.81 95.69 100.56 105.44 110.31" text-anchor="middle" font-size="9.3" font-family="'Noto Sans CJK JP','Liberation Sans',sans-serif">:3,310 </tspan><tspan x="112.75">高値</tspan><tspan x="134.69 139.56 144.44 149.31 154.19 159.06 163.94" text-anchor="middle" font-size="9.3" font-family="'Noto Sans CJK JP','Liberation Sans',sans-serif">:3,310 </tspan><tspan x="166.38">安値</tspan><tspan x="188.31 193.19 198.06 202.94 207.81 212.69 217.56" text-anchor="middle" font-size="9.3" font-family="'Noto Sans CJK JP','Liberation Sans',sans-serif">:3,310 </tspan><tspan x="220.00">終値</tspan><tspan x="241.94 246.81 251.69 256.56 261.44 266.31" text-anchor="middle" font-size="9.3" font-family="'Noto Sans CJK JP','Liberation Sans',sans-serif">:3,310</tspan></text>
<rect x="4.5" y="402.6" width="1014.5" height="3.0" fill="#f4f4f4"/>
<rect x="4.5" y="405.2" width="1014.5" height="0.9" fill="#9a9a9a"/>
<rect x="6.0" y="405.8" width="966.0" height="121.8" fill="#000"/>
<rect x="4.6" y="405.8" width="1.4" height="122.3" fill="#c6c6c6"/>
<path d="M35.4 405.8V527.6M72.5 405.8V527.6M104.1 405.8V527.6M130.6 405.8V527.6M143.4 405.8V527.6M155.2 405.8V527.6M202.4 405.8V527.6M249.5 405.8V527.6M288.2 405.8V527.6M335.5 405.8V527.6M376.6 405.8V527.6M425.1 405.8V527.6M433.4 405.8V527.6M458.0 405.8V527.6M501.2 405.8V527.6M546.1 405.8V527.6M587.6 405.8V527.6M631.8 405.8V527.6M680.3 405.8V527.6M728.5 405.8V527.6M776.4 405.8V527.6M824.3 405.8V527.6M864.3 405.8V527.6M896.7 405.8V527.6M925.6 405.8V527.6M958.0 405.8V527.6M6.0 430.4H972.0M6.0 474.0H972.0M6.0 517.2H972.0" stroke="#525252" stroke-width="0.85" fill="none"/>
<path d="M35.4 405.8V527.6M72.5 405.8V527.6M104.1 405.8V527.6M130.6 405.8V527.6M143.4 405.8V527.6M155.2 405.8V527.6M202.4 405.8V527.6M249.5 405.8V527.6M288.2 405.8V527.6M335.5 405.8V527.6M376.6 405.8V527.6M425.1 405.8V527.6M433.4 405.8V527.6M458.0 405.8V527.6M501.2 405.8V527.6M546.1 405.8V527.6M587.6 405.8V527.6M631.8 405.8V527.6M680.3 405.8V527.6M728.5 405.8V527.6M776.4 405.8V527.6M824.3 405.8V527.6M864.3 405.8V527.6M896.7 405.8V527.6M925.6 405.8V527.6M958.0 405.8V527.6M6.0 430.4H972.0M6.0 474.0H972.0M6.0 517.2H972.0" stroke="#868686" stroke-width="0.85" stroke-dasharray="1.3 1.3" fill="none"/>
<polyline points="6.2,499.1 6.2,499.0 7.1,499.1 7.9,498.3 8.7,498.3 9.4,497.8 9.5,497.4 10.3,498.3 11.1,498.3 11.9,498.3 12.5,498.8 12.7,499.1 13.5,499.1 14.3,499.1 15.1,500.0 15.9,499.1 16.2,500.0 16.7,500.9 17.5,500.9 18.3,500.9 19.1,500.9 19.4,501.2 20.0,500.0 20.8,500.0 21.6,500.0 21.9,500.0 22.4,500.0 23.2,499.1 24.0,498.3 24.4,498.1 24.8,498.3 25.6,499.1 26.4,499.1 26.9,499.4 27.2,499.1 28.0,500.9 28.8,500.9 29.4,501.0 29.6,501.7 30.4,500.9 31.2,501.7 32.0,501.7 32.8,501.7 33.1,502.2 33.7,502.6 34.5,502.6 35.3,503.5 36.1,503.5 36.2,503.8 36.9,504.3 37.7,507.0 38.1,506.9 38.5,507.0 39.3,507.0 40.1,507.0 40.6,506.9 40.9,506.1 41.7,505.2 42.5,504.3 43.1,502.8 43.3,501.7 44.1,501.7 44.9,501.7 45.7,500.9 46.5,500.9 47.4,500.0 47.5,500.4 48.2,500.0 49.0,500.9 49.8,501.7 50.6,501.7 51.4,501.7 51.9,501.9 52.2,502.6 53.0,503.5 53.8,504.3 54.6,507.0 55.0,507.2 55.4,507.0 56.2,507.0 57.0,507.0 57.8,507.0 58.1,507.2 58.6,507.0 59.4,506.1 60.0,505.6 60.3,505.2 61.1,505.2 61.9,506.1 62.5,506.5 62.7,507.0 63.5,505.2 64.3,503.5 65.0,502.8 65.1,501.7 65.9,502.6 66.7,502.6 67.5,501.7 68.3,502.6 69.1,502.6 69.4,502.2 69.9,502.6 70.7,502.6 71.2,503.1 71.5,502.6 72.3,501.7 73.1,499.8 73.1,500.0 74.0,500.0 74.8,500.0 75.6,499.1 76.4,500.0 76.9,500.0 77.2,500.0 78.0,500.0 78.8,499.1 79.6,499.1 80.4,499.1 81.2,498.3 81.9,498.5 82.0,498.3 82.8,497.4 83.6,495.6 84.4,495.6 85.0,494.0 85.2,493.9 86.0,493.9 86.8,493.9 86.9,493.8 87.7,495.6 88.5,496.5 88.8,496.9 89.3,496.5 90.1,493.9 90.6,493.1 90.9,493.0 91.7,494.8 92.5,495.6 93.1,496.2 93.3,495.6 94.1,496.5 94.9,496.5 95.6,495.6 95.7,495.6 96.5,496.5 97.3,497.4 98.1,498.3 98.9,499.1 99.4,500.0 99.7,500.0 100.6,499.1 101.4,500.0 102.2,499.1 102.5,499.4 103.0,499.1 103.8,499.1 104.6,498.3 105.4,497.4 106.2,497.4 106.2,496.9 107.0,497.4 107.8,497.4 108.6,497.4 108.8,497.5 109.4,496.5 110.2,494.8 110.6,494.0 111.0,493.9 111.8,493.9 112.6,493.9 113.1,494.0 113.4,494.8 114.3,496.5 115.1,497.4 115.6,498.5 115.9,498.3 116.7,499.1 117.5,499.1 118.1,499.4 118.3,500.0 119.1,499.1 119.9,499.1 120.7,500.0 121.5,498.3 122.3,499.1 123.1,499.1 123.9,499.1 124.7,499.1 125.0,499.4 125.5,499.1 126.3,500.0 127.1,500.9 127.5,500.6 128.0,500.9 128.5,501.2 128.8,502.6 129.5,503.8 129.6,503.5 130.4,502.6 131.2,502.6 131.8,502.2 132.0,502.6 132.8,502.6 133.6,501.7 134.4,503.5 135.2,504.3 135.5,503.8 136.0,503.5 136.8,504.3 137.6,505.2 138.4,506.1 138.6,505.6 139.2,506.1 140.0,505.2 140.9,505.2 141.1,505.6 141.7,505.2 142.5,504.3 143.2,502.8 143.3,503.5 144.1,505.2 144.9,509.8 144.9,510.4 145.7,509.6 146.5,510.4 147.3,509.6 148.0,510.0 148.1,510.4 148.9,511.3 149.7,511.3 150.5,511.9 150.5,512.2 151.3,513.0 152.1,514.8 152.4,514.8 152.9,514.8 153.7,515.7 154.2,515.2 154.6,515.7 155.4,516.5 156.1,518.1 156.2,519.1 157.0,516.5 157.8,516.5 158.0,516.2 158.6,516.5 159.4,517.4 160.2,518.3 160.8,518.1 161.0,518.3 161.8,517.4 162.6,516.5 163.4,515.7 163.6,516.0 164.2,515.7 165.0,514.8 165.8,514.8 166.1,514.8 166.6,514.8 167.5,515.7 168.3,516.5 168.6,516.5 169.1,517.4 169.9,516.5 170.7,516.5 171.1,516.5 171.5,515.7 172.3,513.9 173.0,512.5 173.1,513.0 173.9,513.0 174.7,515.7 174.9,515.0 175.5,514.8 176.3,514.8 177.1,513.9 177.9,514.8 178.0,514.4 178.7,513.9 179.5,513.0 180.3,513.0 181.1,511.9 181.2,512.2 182.0,513.0 182.8,513.0 183.6,514.8 183.6,514.4 184.4,514.8 185.2,514.8 186.0,514.8 186.8,514.8 187.6,514.8 188.4,514.8 188.6,514.8 189.2,515.7 190.0,516.5 190.8,516.5 191.6,516.5 191.8,517.2 192.4,517.4 193.2,516.5 193.6,516.9 194.0,517.4 194.9,518.3 195.7,519.1 196.1,519.4 196.5,519.1 197.3,518.3 198.0,516.5 198.1,516.5 198.9,517.4 199.7,518.3 200.5,519.1 200.5,518.8 201.3,520.0 202.1,520.0 202.9,520.0 203.7,520.9 204.0,520.6 204.5,519.1 205.3,519.1 206.1,518.1 206.1,517.4 206.9,518.3 207.8,518.3 208.6,518.3 209.2,518.8 209.4,518.3 210.2,518.3 211.0,518.3 211.8,518.3 212.4,518.5 212.6,519.1 213.4,517.4 214.2,517.4 214.2,516.9 215.0,517.4 215.8,517.4 216.6,517.4 217.4,517.4 218.0,518.1 218.2,518.3 219.0,517.4 219.8,518.3 220.6,518.3 221.1,518.1 221.5,518.3 222.3,517.4 223.1,517.4 223.6,516.9 223.9,516.5 224.7,516.5 225.5,515.7 226.3,516.5 226.8,516.2 227.1,516.5 227.9,515.7 228.7,514.8 229.5,514.8 229.9,515.0 230.3,514.8 231.1,515.7 231.9,516.5 232.7,517.4 233.0,517.5 233.5,516.5 234.3,517.4 235.2,516.5 235.5,516.5 236.0,515.7 236.8,517.4 237.6,516.5 238.4,516.5 239.2,517.4 239.2,517.5 240.0,517.4 240.8,517.4 241.6,517.4 242.4,517.4 243.0,516.9 243.2,517.4 244.0,516.5 244.8,516.5 245.5,516.0 245.6,516.5 246.4,516.5 247.2,515.7 248.0,516.2 248.1,516.5 248.9,514.8 249.5,512.5 249.7,512.2 250.5,513.0 251.1,513.5 251.3,513.9 252.1,512.2 252.9,511.3 253.0,511.2 253.7,513.0 254.2,513.8 254.5,513.9 255.3,513.9 255.8,514.0 256.1,514.8 256.5,513.8 256.9,513.0 257.7,512.2 258.5,511.2 258.5,511.3 259.3,510.4 260.1,509.6 260.9,509.6 261.6,508.8 261.8,508.7 262.6,509.6 263.4,509.6 264.1,510.2 264.2,509.6 265.0,509.6 265.8,509.6 266.6,508.7 266.6,509.0 267.4,508.7 268.2,508.7 269.0,510.4 269.8,509.6 270.6,509.6 271.0,509.8 271.4,509.6 272.2,511.3 272.9,511.2 273.0,511.3 273.8,511.3 274.6,509.6 275.4,509.0 275.5,508.7 276.3,509.6 277.1,509.6 277.9,511.3 277.9,511.2 278.7,511.3 279.5,510.4 280.3,511.3 281.0,510.6 281.1,511.3 281.9,510.4 282.7,510.4 283.5,511.3 284.1,511.2 284.3,511.3 285.1,510.4 285.9,509.6 286.6,509.4 286.7,510.4 287.5,509.6 288.4,509.6 289.1,510.0 289.2,509.6 290.0,510.4 290.8,510.4 291.6,510.4 292.4,509.6 292.9,509.4 293.2,509.6 294.0,510.4 294.8,510.4 295.4,511.2 295.6,511.3 296.4,511.3 297.2,511.3 298.0,510.4 298.8,511.3 299.1,511.0 299.6,511.3 300.4,510.4 301.2,510.4 302.1,510.4 302.9,509.6 302.9,509.8 303.7,509.6 304.5,509.6 305.3,508.7 306.0,508.8 306.1,508.7 306.9,508.7 307.7,509.6 308.5,509.8 308.5,509.6 309.3,509.6 310.1,509.6 310.9,509.6 311.6,509.8 311.7,509.6 312.5,509.6 313.3,508.7 314.1,508.1 314.1,507.8 314.9,507.8 315.8,507.8 316.6,507.0 316.6,507.5 317.4,506.1 318.2,507.0 319.0,506.1 319.8,506.1 320.4,505.6 320.6,505.2 321.4,506.1 322.2,507.8 322.2,508.5 323.0,508.7 323.8,507.0 324.6,506.1 324.8,506.5 325.4,506.1 326.2,507.0 327.0,507.0 327.8,507.8 327.9,507.5 328.7,507.8 329.5,507.8 330.3,507.8 331.0,507.5 331.1,507.8 331.9,507.8 332.7,507.8 333.5,508.7 334.1,508.1 334.3,507.8 335.1,507.8 335.9,507.8 336.7,507.0 337.2,507.2 337.5,507.8 338.3,507.8 339.1,508.1 339.1,508.7 339.9,507.8 340.7,507.8 341.0,506.9 341.5,507.8 342.4,509.6 342.9,510.2 343.2,510.4 344.0,511.3 344.8,510.4 345.6,510.4 346.0,510.2 346.4,510.4 347.2,509.6 348.0,509.6 348.5,509.4 348.8,509.6 349.6,509.6 350.4,510.4 351.2,510.4 351.6,510.2 352.0,509.6 352.8,509.6 353.6,508.7 354.1,508.5 354.4,508.7 355.2,508.7 356.0,509.4 356.1,509.6 356.9,509.6 357.7,508.7 358.5,507.8 359.1,508.1 359.3,507.8 360.1,507.0 360.9,507.8 361.7,507.0 362.2,507.2 362.5,507.0 363.3,507.8 364.1,507.8 364.9,507.8 365.4,508.1 365.7,507.8 366.5,507.8 367.3,509.6 367.9,509.4 368.1,509.6 368.9,508.7 369.8,507.0 370.4,506.9 370.6,507.0 371.4,507.0 372.2,507.8 372.2,507.5 373.0,507.8 373.8,506.1 374.6,506.1 374.8,506.2 375.4,507.0 376.2,506.1 377.0,506.1 377.8,506.1 377.9,506.9 378.6,506.1 379.4,505.2 380.2,505.2 380.4,505.0 381.0,504.3 381.8,504.3 382.7,504.3 383.5,504.3 383.5,503.5 384.3,504.3 384.5,503.8 385.1,502.6 385.9,502.6 386.7,501.7 387.1,502.2 387.5,501.7 388.3,501.7 389.1,500.9 389.9,500.9 390.2,500.2 390.7,500.0 391.5,500.0 392.3,500.0 393.1,500.0 393.4,500.0 393.9,500.0 394.7,500.9 395.5,501.7 395.9,501.9 396.4,503.5 397.1,505.0 397.2,505.2 398.0,503.5 398.8,502.6 399.6,501.7 400.4,500.0 400.9,500.2 401.2,500.0 402.0,500.0 402.8,499.1 403.6,499.1 404.0,499.4 404.4,499.1 405.2,499.1 406.0,500.0 406.8,500.0 407.6,500.0 407.8,500.2 408.4,500.9 409.2,500.9 410.1,500.9 410.9,501.7 410.9,501.9 411.7,501.7 412.5,500.9 413.3,500.0 414.0,499.8 414.1,499.1 414.9,499.1 415.7,499.1 416.5,498.3 417.1,498.1 417.3,497.4 418.1,496.5 418.9,495.6 419.6,495.0 419.7,494.8 420.5,494.8 421.3,493.9 421.5,494.4 422.1,495.6 423.0,495.6 423.4,496.2 423.8,496.5 424.6,497.4 425.2,497.5 425.4,497.4 426.2,496.5 427.0,496.5 427.8,496.0 427.8,495.6 428.6,496.5 429.4,496.5 430.2,496.5 430.2,496.2 431.0,495.6 431.8,494.8 432.1,493.8 432.6,494.8 433.4,496.5 434.0,497.5 434.2,496.5 435.0,494.8 435.5,493.5 435.8,493.9 436.7,494.8 437.5,494.8 437.8,495.6 438.3,496.5 439.1,498.3 439.6,498.5 439.9,498.3 440.7,498.3 441.5,499.1 442.3,499.1 442.8,498.8 443.1,498.3 443.9,499.1 444.7,500.0 445.5,500.0 445.9,500.2 446.3,499.1 447.1,499.1 447.9,498.3 448.4,496.9 448.7,496.5 449.5,497.4 450.4,496.5 451.2,497.4 452.0,496.5 452.8,497.4 453.4,496.9 453.6,496.5 454.4,497.4 455.2,498.3 456.0,499.1 456.5,498.8 456.8,499.1 457.6,498.3 458.4,499.1 459.0,498.5 459.2,498.3 460.0,499.1 460.8,500.9 461.6,500.9 462.4,501.7 462.8,501.9 463.3,502.6 464.1,501.7 464.9,501.7 465.7,500.9 466.5,500.9 466.5,501.0 467.3,500.9 468.1,501.7 468.9,501.7 469.6,501.2 469.7,500.9 470.5,500.9 471.3,500.9 472.1,502.6 472.1,501.9 472.9,499.1 473.4,497.5 473.7,497.4 474.5,496.5 475.3,495.6 476.1,494.8 476.5,494.8 477.0,495.6 477.8,495.6 478.4,497.2 478.6,497.4 479.4,497.4 480.2,497.4 481.0,496.5 481.5,496.9 481.8,496.5 482.6,497.4 483.4,498.3 484.0,498.8 484.2,499.1 485.0,498.3 485.8,497.4 486.5,497.5 486.6,497.4 487.4,498.3 488.2,498.3 489.0,499.1 489.6,499.8 489.8,500.0 490.7,499.1 491.5,498.3 492.3,497.4 492.8,496.2 493.1,495.6 493.9,494.8 494.6,493.1 494.7,493.9 495.5,493.9 496.3,495.6 497.1,497.4 497.1,497.2 497.9,496.5 498.7,496.5 499.5,495.6 499.6,496.0 500.3,495.6 501.1,494.8 501.9,493.9 502.7,492.2 502.8,493.1 503.6,492.2 504.4,492.2 505.2,490.4 505.9,490.6 506.0,490.4 506.8,491.3 507.6,490.4 508.4,491.0 508.4,491.3 509.2,493.0 510.0,494.8 510.8,497.4 510.9,497.2 511.6,497.4 511.8,497.5 512.4,496.5 512.5,497.2 513.2,494.8 513.2,494.4 514.0,494.8 514.8,493.9 515.6,493.9 516.4,493.9 517.0,493.8 517.3,493.9 518.1,495.6 518.9,498.3 518.9,497.5 519.7,497.4 520.5,498.3 521.3,498.3 522.0,498.8 522.1,499.1 522.9,497.4 523.7,496.5 523.9,495.6 524.5,495.6 525.3,496.5 526.1,497.4 526.4,497.8 526.9,495.6 527.6,495.0 527.7,495.6 528.5,494.8 529.3,493.0 530.1,493.0 530.8,491.9 531.0,492.2 531.8,492.2 532.6,491.3 533.4,491.3 534.2,491.3 535.0,491.3 535.8,491.0 535.8,490.4 536.6,491.3 537.4,492.2 538.2,493.0 538.9,493.8 539.0,493.9 539.8,494.8 540.6,493.9 541.4,493.9 542.2,494.8 542.6,494.4 543.0,493.9 543.9,493.0 544.7,492.2 545.5,491.3 545.8,490.6 546.3,490.4 547.1,490.4 547.9,491.3 548.2,491.0 548.7,491.3 549.5,490.4 550.3,490.4 551.1,490.4 551.9,490.4 552.6,490.2 552.7,489.6 553.5,486.1 553.9,484.0 554.3,483.5 555.1,483.5 555.9,482.6 556.7,481.7 557.0,481.2 557.6,483.5 558.4,485.2 558.9,486.9 559.2,486.9 560.0,487.8 560.8,488.7 561.4,488.1 561.6,487.8 562.4,488.7 563.2,488.7 564.0,488.7 564.5,489.0 564.8,488.7 565.6,486.9 566.4,486.1 567.2,484.3 567.6,483.8 568.0,483.5 568.8,484.3 569.6,484.3 570.4,484.3 571.3,485.2 571.4,484.8 572.1,484.3 572.9,483.5 573.7,483.5 573.9,482.8 574.5,483.5 575.3,486.1 576.1,488.7 576.4,489.4 576.9,489.6 577.6,490.0 577.7,489.6 578.5,489.6 579.3,487.8 580.1,487.8 580.9,487.8 581.7,486.1 582.5,486.1 582.6,485.2 583.3,483.5 584.2,481.7 585.0,480.0 585.1,479.8 585.8,480.0 586.6,478.2 587.0,478.5 587.4,478.2 588.2,479.1 589.0,479.1 589.8,479.1 590.1,479.0 590.6,479.1 591.4,477.4 592.0,476.9 592.2,477.4 593.0,480.0 593.2,480.2 593.8,480.0 594.6,480.0 595.4,478.2 596.2,478.2 597.0,476.5 597.6,476.9 597.9,477.4 598.7,476.5 599.5,477.4 600.3,477.4 601.1,477.4 601.9,477.4 602.0,477.2 602.7,477.4 603.5,477.4 604.3,477.4 605.1,478.2 605.1,478.1 605.9,479.1 606.7,479.1 607.0,479.8 607.5,479.1 608.3,478.2 608.9,476.9 609.1,477.4 609.9,477.4 610.8,477.4 611.6,477.4 612.0,477.2 612.4,477.4 613.2,479.1 613.9,480.0 614.0,480.0 614.8,479.1 615.6,480.0 615.8,479.4 616.4,475.6 616.8,473.5 617.2,472.2 618.0,472.2 618.2,471.2 618.8,472.2 619.6,473.0 620.4,473.9 620.8,473.8 621.2,473.9 622.0,473.9 622.8,474.8 623.2,474.8 623.6,474.8 624.5,473.0 625.1,472.8 625.3,473.0 626.1,473.9 626.9,474.8 627.0,474.4 627.7,475.6 628.2,477.5 628.5,477.4 629.3,474.8 630.1,473.9 630.1,473.8 630.9,475.6 631.7,477.4 631.8,476.9 632.5,478.2 633.2,480.2 633.3,480.0 634.1,480.0 634.9,479.1 635.1,478.8 635.7,478.2 636.5,476.5 637.0,475.2 637.3,475.6 638.2,476.5 639.0,475.6 639.5,476.2 639.8,475.6 640.5,475.0 640.6,474.8 641.4,475.6 642.2,475.6 643.0,476.5 643.8,475.6 643.8,475.6 644.6,475.6 645.4,476.5 646.2,476.5 647.0,476.5 647.5,476.9 647.8,476.5 648.6,474.8 649.4,473.9 650.2,472.2 650.6,471.9 651.1,473.0 651.9,473.0 652.7,473.9 653.1,475.0 653.5,474.8 654.3,474.8 655.1,474.8 655.9,473.9 656.7,473.9 656.9,473.8 657.5,474.8 658.3,476.5 658.8,476.9 659.1,476.5 659.9,475.6 660.6,474.4 660.7,474.8 661.5,474.8 662.3,475.6 663.1,476.2 663.1,477.4 663.9,474.8 664.8,472.2 665.6,471.3 666.2,469.4 666.4,469.5 667.2,471.3 668.0,472.2 668.1,472.5 668.8,472.2 669.6,471.3 670.4,470.4 671.2,470.4 671.2,470.0 672.0,468.7 672.8,467.8 673.6,466.9 674.4,465.2 675.0,465.0 675.2,465.2 676.0,466.1 676.2,466.9 676.8,465.2 677.6,462.6 678.1,461.2 678.5,461.7 679.3,462.6 680.0,463.8 680.1,463.5 680.9,462.6 681.7,460.8 682.5,460.0 682.5,460.0 683.3,463.5 684.1,466.1 684.4,466.9 684.9,467.8 685.7,468.7 686.5,469.5 686.9,471.2 687.3,471.3 688.1,470.4 688.9,469.5 689.7,469.5 690.0,468.8 690.5,469.5 691.4,471.3 692.2,472.2 692.5,472.5 693.0,471.3 693.8,470.4 694.6,469.5 695.4,466.9 695.6,466.9 696.2,468.7 697.0,469.5 697.8,471.3 698.1,471.9 698.6,471.3 699.4,469.5 700.2,467.8 701.0,466.1 701.2,465.6 701.8,466.1 702.6,466.9 703.4,466.9 703.8,467.5 704.2,466.1 705.1,464.3 705.9,461.7 706.2,460.6 706.7,460.8 707.5,460.0 708.3,460.0 709.1,460.0 709.9,460.0 710.0,459.4 710.7,459.1 711.5,459.1 711.9,458.8 712.3,462.6 712.8,466.2 713.1,463.5 713.8,458.1 713.9,458.2 714.7,457.4 715.0,456.9 715.5,457.4 716.3,457.4 716.9,457.5 717.1,457.4 717.9,456.5 718.8,455.6 719.6,455.6 720.0,455.0 720.4,454.8 721.2,452.1 722.0,451.3 722.8,450.4 723.1,449.4 723.6,449.5 724.4,451.3 725.0,451.9 725.2,452.1 726.0,453.9 726.8,456.5 726.9,456.0 727.6,453.9 728.4,450.4 729.2,447.8 729.4,447.5 730.0,446.1 730.8,445.2 731.7,442.6 731.9,441.9 732.5,441.7 733.3,439.1 733.5,439.4 734.1,440.0 734.9,441.7 735.6,441.9 735.7,440.8 736.5,443.4 736.9,443.8 737.3,443.4 738.1,441.7 738.8,440.6 738.9,440.8 739.7,443.4 740.0,443.8 740.5,443.4 741.3,441.7 742.1,441.7 742.9,440.0 743.1,440.0 743.7,441.7 744.4,442.5 744.5,441.7 745.4,438.2 746.2,434.8 746.2,434.4 747.0,436.5 747.8,437.4 748.6,440.0 748.8,440.6 749.4,439.1 750.2,437.4 750.6,436.2 751.0,436.5 751.8,439.1 752.6,440.0 753.1,441.2 753.4,441.7 754.2,441.7 755.0,442.6 755.6,443.5 755.8,443.4 756.6,442.6 757.4,441.7 757.5,441.2 757.6,436.5 758.2,432.1 758.2,431.3 759.1,426.0 759.1,425.9 759.9,421.7 760.1,420.2 760.7,420.0 761.0,418.1 761.5,418.2 762.2,419.6 762.3,419.1 763.1,419.1 763.9,418.2 764.4,417.4 764.7,416.5 765.4,415.2 765.5,414.7 766.3,411.3 766.5,411.2 766.9,415.9 767.1,417.3 767.6,420.6 767.9,420.8 768.7,422.6 769.1,423.4 769.5,423.4 770.3,424.3 770.7,425.6 771.1,427.8 771.6,430.2 772.0,430.4 772.8,429.5 773.2,429.9 773.6,429.5 774.1,429.0 774.4,429.5 775.2,430.4 775.7,431.2 776.0,430.4 776.8,430.4 777.2,429.3 777.6,428.7 778.4,427.8 779.1,427.1 779.2,426.0 780.0,426.9 780.8,426.0 781.0,425.6 781.6,425.2 782.2,424.0 782.4,424.3 783.2,425.6 783.2,426.0 784.0,428.7 784.1,429.3 784.8,427.8 785.7,426.0 785.7,425.9 786.5,425.2 787.3,425.2 787.9,424.9 788.1,424.3 788.9,424.3 789.7,423.4 789.8,423.4 790.5,424.3 791.0,425.2 791.3,426.0 792.1,429.5 792.2,429.9 792.9,430.4 793.7,430.4 794.4,429.9 794.5,430.4 795.1,433.4 795.3,433.9 796.0,436.2 796.1,436.5 796.9,434.8 797.7,433.9 797.9,434.0 798.5,433.0 799.4,432.1 799.8,431.8 800.2,432.1 801.0,432.1 801.8,431.8 801.8,432.1 802.6,433.0 803.4,434.8 803.6,434.6 804.2,433.9 805.0,433.0 805.8,432.1 806.1,432.1 806.6,433.0 807.4,435.6 808.2,437.4 808.6,439.0 809.0,439.1 809.8,439.1 810.6,439.1 811.1,439.2 811.4,439.1 812.3,438.2 813.0,437.5 813.1,437.4 813.9,440.0 814.7,439.1 815.5,441.7 815.5,441.5 816.3,440.0 817.1,440.8 817.4,440.0 817.9,441.7 818.6,441.5 818.7,440.8 819.5,440.8 820.3,440.8 821.1,440.0 821.9,439.1 822.4,438.8 822.7,438.2 823.5,440.0 824.3,440.0 825.1,440.0 825.5,440.5 826.0,440.0 826.8,440.8 827.6,440.0 828.4,440.0 828.6,440.2 829.2,440.0 830.0,439.1 830.8,440.0 831.6,439.1 831.8,439.2 832.4,438.2 833.2,437.4 833.6,436.8 834.0,437.4 834.8,437.4 835.5,437.8 835.6,437.4 836.4,436.5 837.2,435.6 837.4,434.6 838.0,434.8 838.8,435.6 839.7,436.5 840.5,437.4 840.5,437.1 841.3,436.5 842.1,436.5 842.4,435.9 842.9,436.5 843.7,437.4 844.2,437.8 844.5,438.2 845.3,437.4 846.1,436.5 846.8,436.8 846.9,435.6 847.7,434.8 848.0,433.0 848.5,433.9 849.3,433.0 849.9,433.4 850.1,433.0 850.9,433.9 851.7,434.8 852.6,435.6 853.0,435.5 853.4,435.6 854.2,434.8 855.0,435.6 855.8,434.8 856.6,434.8 856.8,435.0 857.4,435.6 858.2,436.5 859.0,437.4 859.2,437.1 859.8,437.4 860.6,437.4 861.4,438.2 862.2,439.1 863.0,440.0 863.6,440.2 863.8,440.8 864.6,443.4 865.2,445.9 865.4,445.2 866.3,443.4 867.1,440.8 867.4,440.0 867.9,440.0 868.7,440.0 869.2,440.9 869.5,440.8 870.3,440.0 871.1,439.1 871.8,438.4 871.9,438.2 872.7,438.2 873.5,439.1 874.2,438.4 874.3,438.2 875.1,439.1 875.9,440.0 876.1,440.2 876.7,440.0 877.5,439.1 878.3,438.2 879.1,437.4 879.2,437.1 880.0,436.5 880.8,436.5 881.6,437.4 881.8,436.8 882.4,437.4 883.2,436.5 884.0,437.4 884.2,436.8 884.8,437.4 885.6,436.5 886.4,436.5 886.8,435.9 887.2,435.6 888.0,437.4 888.8,438.2 889.6,439.1 889.9,439.0 890.4,439.1 891.2,439.1 891.8,439.6 892.0,439.1 892.9,438.2 893.7,437.4 894.2,436.8 894.5,437.4 895.3,435.6 895.8,435.5 896.1,435.6 896.4,434.9 896.9,437.4 897.7,439.1 897.8,439.2 898.5,439.1 899.3,440.0 900.1,440.0 900.2,440.1 900.9,440.8 901.7,440.0 902.0,439.6 902.5,438.2 903.0,435.4 903.3,435.6 904.1,434.8 904.9,434.8 905.3,434.5 905.7,433.9 906.6,433.9 907.4,432.1 907.4,432.3 908.2,433.0 909.0,434.8 909.5,434.9 909.8,434.8 910.6,435.6 910.9,435.9 911.4,435.6 912.2,434.8 912.8,433.5 913.0,433.9 913.8,433.0 914.6,432.1 915.2,432.6 915.4,433.0 916.2,432.1 917.0,432.1 917.8,431.3 918.0,431.7 918.6,432.1 919.4,432.1 920.3,433.0 920.3,433.2 921.1,432.1 921.7,431.2 921.9,431.3 922.7,431.3 923.5,430.4 923.6,431.0 924.3,433.0 925.1,433.9 925.5,434.5 925.9,433.9 926.7,433.9 927.5,433.0 927.8,433.5 928.3,433.0 929.1,433.0 929.9,433.0 930.7,432.1 931.1,432.1 931.5,432.1 932.3,432.1 932.5,431.2 933.0,426.5 933.2,426.9 934.0,426.0 934.2,425.6 934.8,426.0 935.6,427.8 936.2,428.4 936.4,428.7 937.2,429.5 938.0,429.5 938.8,429.5 939.1,430.1 939.6,429.5 940.4,427.8 940.9,427.6 941.2,427.8 942.0,428.7 942.8,429.1 942.8,429.5 943.6,428.7 944.4,426.9 944.7,427.4 945.2,426.9 946.0,426.9 946.9,426.0 947.5,427.0 947.7,426.9 948.5,428.7 949.2,430.4 949.3,429.5 950.1,426.9 950.3,426.3 950.9,425.2 951.7,426.0 952.5,425.2 953.1,424.8 953.3,424.3 954.1,425.2 954.9,425.2 955.5,425.1 955.7,426.0 956.5,425.2 957.3,425.2 957.3,424.8 958.0,429.1 958.1,429.5 958.9,429.5 959.7,429.3 959.7,429.5 960.6,429.5 961.4,430.4 962.0,431.2 962.2,430.4 963.0,426.5 963.0,426.9 963.8,426.0 964.6,424.3 965.3,424.4 965.4,424.3 966.2,423.4 967.0,423.4 967.7,422.7 967.8,422.6 968.6,421.7 969.4,421.7 969.8,421.3 970.2,426.0 970.6,429.3" fill="none" stroke="#ff0000" stroke-width="1.6" stroke-linejoin="round"/>
<text y="535.5" fill="#c4c4c4" font-size="9.75" xml:space="preserve" ><tspan x="38.24 43.11" text-anchor="middle" font-size="9.3" font-family="'Noto Sans CJK JP','Liberation Sans',sans-serif">02</tspan></text>
<text y="535.5" fill="#c4c4c4" font-size="9.75" xml:space="preserve" ><tspan x="75.34 80.21" text-anchor="middle" font-size="9.3" font-family="'Noto Sans CJK JP','Liberation Sans',sans-serif">03</tspan></text>
<text y="535.5" fill="#c4c4c4" font-size="9.75" xml:space="preserve" ><tspan x="106.94 111.81" text-anchor="middle" font-size="9.3" font-family="'Noto Sans CJK JP','Liberation Sans',sans-serif">04</tspan></text>
<text y="535.5" fill="#c4c4c4" font-size="9.75" xml:space="preserve" ><tspan x="158.09 162.96" text-anchor="middle" font-size="9.3" font-family="'Noto Sans CJK JP','Liberation Sans',sans-serif">09</tspan></text>
<text y="535.5" fill="#c4c4c4" font-size="9.75" xml:space="preserve" ><tspan x="205.24 210.11" text-anchor="middle" font-size="9.3" font-family="'Noto Sans CJK JP','Liberation Sans',sans-serif">10</tspan></text>
<text y="535.5" fill="#c4c4c4" font-size="9.75" xml:space="preserve" ><tspan x="252.34 257.21" text-anchor="middle" font-size="9.3" font-family="'Noto Sans CJK JP','Liberation Sans',sans-serif">11</tspan></text>
<text y="535.5" fill="#c4c4c4" font-size="9.75" xml:space="preserve" ><tspan x="291.09 295.96" text-anchor="middle" font-size="9.3" font-family="'Noto Sans CJK JP','Liberation Sans',sans-serif">12</tspan></text>
<text y="535.5" fill="#c4c4c4" font-size="9.75" xml:space="preserve" ><tspan x="338.34 343.21" text-anchor="middle" font-size="9.3" font-family="'Noto Sans CJK JP','Liberation Sans',sans-serif">13</tspan></text>
<text y="535.5" fill="#c4c4c4" font-size="9.75" xml:space="preserve" ><tspan x="379.44 384.31" text-anchor="middle" font-size="9.3" font-family="'Noto Sans CJK JP','Liberation Sans',sans-serif">14</tspan></text>
<text y="535.5" fill="#c4c4c4" font-size="9.75" xml:space="preserve" ><tspan x="436.24 441.11" text-anchor="middle" font-size="9.3" font-family="'Noto Sans CJK JP','Liberation Sans',sans-serif">16</tspan></text>
<text y="535.5" fill="#c4c4c4" font-size="9.75" xml:space="preserve" ><tspan x="460.84 465.71" text-anchor="middle" font-size="9.3" font-family="'Noto Sans CJK JP','Liberation Sans',sans-serif">17</tspan></text>
<text y="535.5" fill="#c4c4c4" font-size="9.75" xml:space="preserve" ><tspan x="504.04 508.91" text-anchor="middle" font-size="9.3" font-family="'Noto Sans CJK JP','Liberation Sans',sans-serif">18</tspan></text>
<text y="535.5" fill="#c4c4c4" font-size="9.75" xml:space="preserve" ><tspan x="548.94 553.81" text-anchor="middle" font-size="9.3" font-family="'Noto Sans CJK JP','Liberation Sans',sans-serif">19</tspan></text>
<text y="535.5" fill="#c4c4c4" font-size="9.75" xml:space="preserve" ><tspan x="590.44 595.31" text-anchor="middle" font-size="9.3" font-family="'Noto Sans CJK JP','Liberation Sans',sans-serif">20</tspan></text>
<text y="535.5" fill="#c4c4c4" font-size="9.75" xml:space="preserve" ><tspan x="634.59 639.46" text-anchor="middle" font-size="9.3" font-family="'Noto Sans CJK JP','Liberation Sans',sans-serif">21</tspan></text>
<text y="535.5" fill="#c4c4c4" font-size="9.75" xml:space="preserve" ><tspan x="683.14 688.01" text-anchor="middle" font-size="9.3" font-family="'Noto Sans CJK JP','Liberation Sans',sans-serif">22</tspan></text>
<text y="535.5" fill="#c4c4c4" font-size="9.75" xml:space="preserve" ><tspan x="731.34 736.21" text-anchor="middle" font-size="9.3" font-family="'Noto Sans CJK JP','Liberation Sans',sans-serif">23</tspan></text>
<text y="535.5" fill="#c4c4c4" font-size="9.75" xml:space="preserve" ><tspan x="779.24 784.11" text-anchor="middle" font-size="9.3" font-family="'Noto Sans CJK JP','Liberation Sans',sans-serif">00</tspan></text>
<text y="535.5" fill="#c4c4c4" font-size="9.75" xml:space="preserve" ><tspan x="827.14 832.01" text-anchor="middle" font-size="9.3" font-family="'Noto Sans CJK JP','Liberation Sans',sans-serif">01</tspan></text>
<text y="535.5" fill="#c4c4c4" font-size="9.75" xml:space="preserve" ><tspan x="867.14 872.01" text-anchor="middle" font-size="9.3" font-family="'Noto Sans CJK JP','Liberation Sans',sans-serif">02</tspan></text>
<text y="535.5" fill="#c4c4c4" font-size="9.75" xml:space="preserve" ><tspan x="899.54 904.41" text-anchor="middle" font-size="9.3" font-family="'Noto Sans CJK JP','Liberation Sans',sans-serif">03</tspan></text>
<text y="535.5" fill="#c4c4c4" font-size="9.75" xml:space="preserve" ><tspan x="928.49 933.36" text-anchor="middle" font-size="9.3" font-family="'Noto Sans CJK JP','Liberation Sans',sans-serif">04</tspan></text>
<text y="535.5" fill="#c4c4c4" font-size="9.75" xml:space="preserve" ><tspan x="960.84 965.71" text-anchor="middle" font-size="9.3" font-family="'Noto Sans CJK JP','Liberation Sans',sans-serif">05</tspan></text>
<text y="535.5" fill="#c4c4c4" font-size="9.75" xml:space="preserve" ><tspan x="120.04 124.91" text-anchor="middle" font-size="9.3" font-family="'Noto Sans CJK JP','Liberation Sans',sans-serif">05</tspan></text>
<text y="535.5" fill="#c4c4c4" font-size="9.75" xml:space="preserve" ><tspan x="133.84 138.71" text-anchor="middle" font-size="9.3" font-family="'Noto Sans CJK JP','Liberation Sans',sans-serif">08</tspan></text>
<text y="535.5" fill="#c4c4c4" font-size="9.75" xml:space="preserve" ><tspan x="415.74 420.61" text-anchor="middle" font-size="9.3" font-family="'Noto Sans CJK JP','Liberation Sans',sans-serif">15</tspan></text>
<text y="523.8" fill="#c4c4c4" font-size="9.75" xml:space="preserve" ><tspan x="780.14 785.01" text-anchor="middle" font-size="9.3" font-family="'Noto Sans CJK JP','Liberation Sans',sans-serif">15</tspan></text>
<text y="471.9" fill="#b8b8b8" font-size="9.75" xml:space="preserve" ><tspan x="974.54 979.41 984.29 989.16 994.04" text-anchor="middle" font-size="9.3" font-family="'Noto Sans CJK JP','Liberation Sans',sans-serif">3,000</tspan></text>
<text y="515.1" fill="#b8b8b8" font-size="9.75" xml:space="preserve" ><tspan x="974.54 979.41 984.29 989.16 994.04" text-anchor="middle" font-size="9.3" font-family="'Noto Sans CJK JP','Liberation Sans',sans-serif">2,950</tspan></text>
<path d="M972.3 406.3V527.6H6.0" stroke="#b8b8b8" stroke-width="1" fill="none"/>
<path d="M4.6 406.3H972.8" stroke="#a0a0a0" stroke-width="1" fill="none"/>
<rect x="972.6" y="422.0" width="46.4" height="17.3" fill="#d4d4d4"/>
<text y="433.6" fill="#000" font-size="9.75" xml:space="preserve" stroke="#000" stroke-width="0.5"><tspan x="984.94 989.81 994.69 999.56 1004.44" text-anchor="middle" font-size="9.0" font-family="'Noto Sans CJK JP','Liberation Sans',sans-serif">3,051</tspan></text>
<text y="416.0" fill="#d0d0d0" font-size="9.75" xml:space="preserve" ><tspan x="7.94" text-anchor="middle" font-size="9.3" font-family="'Noto Sans CJK JP','Liberation Sans',sans-serif">[</tspan><tspan x="10.38">金</tspan><tspan x="22.56 27.44 32.31 37.19 42.06 46.94 51.81 56.69 61.56 66.44 71.31 76.19" text-anchor="middle" font-size="9.3" font-family="'Noto Sans CJK JP','Liberation Sans',sans-serif"> 22/08 6,361</tspan><tspan x="78.62">×</tspan><tspan x="90.81 95.69 100.56 105.44 110.31" text-anchor="middle" font-size="9.3" font-family="'Noto Sans CJK JP','Liberation Sans',sans-serif">1.00]</tspan><tspan x="112.75">－</tspan><tspan x="124.94" text-anchor="middle" font-size="9.3" font-family="'Noto Sans CJK JP','Liberation Sans',sans-serif">[</tspan><tspan x="127.38">白金</tspan><tspan x="149.31 154.19 159.06 163.94 168.81 173.69 178.56 183.44 188.31 193.19 198.06 202.94" text-anchor="middle" font-size="9.3" font-family="'Noto Sans CJK JP','Liberation Sans',sans-serif"> 22/08 3,310</tspan><tspan x="205.38">×</tspan><tspan x="217.56 222.44 227.31 232.19 237.06 241.94" text-anchor="middle" font-size="9.3" font-family="'Noto Sans CJK JP','Liberation Sans',sans-serif">1.00] </tspan><tspan x="244.38">終値</tspan><tspan x="266.31" text-anchor="middle" font-size="9.3" font-family="'Noto Sans CJK JP','Liberation Sans',sans-serif"> </tspan><tspan x="268.75">時刻</tspan><tspan x="290.69 295.56 300.44 305.31 310.19 315.06 319.94 324.81 329.69 334.56 339.44 344.31" text-anchor="middle" font-size="9.3" font-family="'Noto Sans CJK JP','Liberation Sans',sans-serif">:05:30 3,051</tspan></text>
<text x="23.4" y="15.2" fill="#000" font-size="9.9" textLength="9.2" lengthAdjust="spacingAndGlyphs" >金</text>
<text x="32.9" y="15.2" fill="#000" font-size="9.9" textLength="4.0" lengthAdjust="spacingAndGlyphs"  font-family="'Noto Sans CJK JP','Liberation Sans',sans-serif">1</text>
<text x="37.4" y="15.2" fill="#000" font-size="9.9" textLength="18.6" lengthAdjust="spacingAndGlyphs" >分足</text>
<text x="56.6" y="15.2" fill="#000" font-size="9.9" textLength="39.0" lengthAdjust="spacingAndGlyphs"  font-family="'Noto Sans CJK JP','Liberation Sans',sans-serif">[2022/08]</text>
<text x="96.2" y="15.2" fill="#000" font-size="9.9" textLength="15.0" lengthAdjust="spacingAndGlyphs"  font-family="'Noto Sans CJK JP','Liberation Sans',sans-serif">1.00</text>
<text x="113.6" y="15.2" fill="#000" font-size="9.9" textLength="4.6" lengthAdjust="spacingAndGlyphs"  font-family="'Noto Sans CJK JP','Liberation Sans',sans-serif">-</text>
<text x="122.2" y="15.2" fill="#000" font-size="9.9" textLength="18.6" lengthAdjust="spacingAndGlyphs" >白金</text>
<text x="141.7" y="15.2" fill="#000" font-size="9.9" textLength="4.0" lengthAdjust="spacingAndGlyphs"  font-family="'Noto Sans CJK JP','Liberation Sans',sans-serif">1</text>
<text x="146.2" y="15.2" fill="#000" font-size="9.9" textLength="18.6" lengthAdjust="spacingAndGlyphs" >分足</text>
<text x="165.4" y="15.2" fill="#000" font-size="9.9" textLength="39.0" lengthAdjust="spacingAndGlyphs"  font-family="'Noto Sans CJK JP','Liberation Sans',sans-serif">[2022/08]</text>
<text x="205.0" y="15.2" fill="#000" font-size="9.9" textLength="15.0" lengthAdjust="spacingAndGlyphs"  font-family="'Noto Sans CJK JP','Liberation Sans',sans-serif">1.00</text>
<rect x="8.6" y="6.6" width="10.2" height="9.8" fill="#fafafa"/>
<path d="M8.6 6.4V16.4H18.8" stroke="#9a9a9a" stroke-width="0.9" fill="none"/>
<path d="M10.6 11.0v4.4M13.2 7.6v4.2M16.6 8.4v4.2" stroke="#f01828" stroke-width="1.5"/>
<path d="M11.9 9.4v4.6M14.9 8.0v5.0M17.6 9.0v4.2" stroke="#2048d8" stroke-width="1.3"/>
<text x="8.8" y="32.9" fill="#1a1a28" font-size="9.7" textLength="9.6" lengthAdjust="spacingAndGlyphs" >金</text>
<text x="27.0" y="32.9" fill="#1a1a28" font-size="9.7" textLength="32.4" lengthAdjust="spacingAndGlyphs"  font-family="'Noto Sans CJK JP','Liberation Sans',sans-serif">2022/08</text>
<text x="66.0" y="31.9" fill="#2a2a2a" font-size="9.7" textLength="14.2" lengthAdjust="spacingAndGlyphs" stroke="#2a2a2a" stroke-width="0.2" font-family="'Noto Sans CJK JP','Liberation Sans',sans-serif">1.00</text>
<rect x="90.4" y="23.6" width="10.8" height="10.8" fill="#dcdcdc" stroke="#c4c4c4" stroke-width="0.6"/><path d="M90.4 29.0H101.2" stroke="#b8b8b8" stroke-width="0.8"/><path d="M95.8 25.2l2.2 2.7h-4.4z" fill="#111"/><path d="M95.8 32.8l2.2 -2.7h-4.4z" fill="#111"/>
<text x="112.4" y="32.9" fill="#1a1a28" font-size="9.7" textLength="18.0" lengthAdjust="spacingAndGlyphs" >白金</text>
<text x="139.2" y="32.9" fill="#1a1a28" font-size="9.7" textLength="32.4" lengthAdjust="spacingAndGlyphs"  font-family="'Noto Sans CJK JP','Liberation Sans',sans-serif">2022/08</text>
<text x="178.6" y="31.9" fill="#2a2a2a" font-size="9.7" textLength="14.2" lengthAdjust="spacingAndGlyphs" stroke="#2a2a2a" stroke-width="0.2" font-family="'Noto Sans CJK JP','Liberation Sans',sans-serif">1.00</text>
<rect x="203.0" y="23.6" width="10.8" height="10.8" fill="#dcdcdc" stroke="#c4c4c4" stroke-width="0.6"/><path d="M203.0 29.0H213.8" stroke="#b8b8b8" stroke-width="0.8"/><path d="M208.4 25.2l2.2 2.7h-4.4z" fill="#111"/><path d="M208.4 32.8l2.2 -2.7h-4.4z" fill="#111"/>
<text x="224.2" y="32.9" fill="#1a1a28" font-size="9.7" textLength="18.4" lengthAdjust="spacingAndGlyphs" >分足</text>
<path d="M247.6 28.2h4.6l-2.3 2.4z" fill="#111"/>
<text x="256.8" y="31.9" fill="#2a2a2a" font-size="9.7" textLength="18.2" lengthAdjust="spacingAndGlyphs" stroke="#2a2a2a" stroke-width="0.2" font-family="'Noto Sans CJK JP','Liberation Sans',sans-serif">1200</text>
<rect x="279.6" y="23.6" width="10.8" height="10.8" fill="#dcdcdc" stroke="#c4c4c4" stroke-width="0.6"/><path d="M279.6 29.0H290.4" stroke="#b8b8b8" stroke-width="0.8"/><path d="M285.0 25.2l2.2 2.7h-4.4z" fill="#111"/><path d="M285.0 32.8l2.2 -2.7h-4.4z" fill="#111"/>
<text x="296.4" y="32.9" fill="#1a1a28" font-size="9.7" textLength="4.0" lengthAdjust="spacingAndGlyphs"  font-family="'Noto Sans CJK JP','Liberation Sans',sans-serif">1</text>
<text x="300.6" y="32.9" fill="#1a1a28" font-size="9.7" textLength="18.0" lengthAdjust="spacingAndGlyphs" >分足</text>
<path d="M323.8 28.2h4.6l-2.3 2.4z" fill="#111"/>
<rect x="336.4" y="22.2" width="13.8" height="13.0" fill="#e2e2e6"/>
<path d="M336.4 35.2V22.2H350.2" stroke="#7c7c84" stroke-width="0.9" fill="none"/>
<path d="M336.6 35.3H350.3V22.4" stroke="#fafafa" stroke-width="0.9" fill="none"/>
<path d="M337.4 26.8H349.6M340.7 23.2V34.4" stroke="#8a8ad8" stroke-width="1.1" fill="none"/>
<path d="M343.0 28.6h3.8l-1.3 1.3 2.4 2.4-1.1 1.1-2.4-2.4-1.4 1.4z" fill="#9a20a8"/>
<rect x="359.6" y="22.2" width="13.4" height="13.0" fill="#a9a9ad"/>
<path d="M359.6 35.2V22.2H373" stroke="#77777d" stroke-width="0.9" fill="none"/>
<path d="M359.8 35.3H373.1V22.4" stroke="#f4f4f4" stroke-width="0.9" fill="none"/>
<path d="M362.2 24.4l8.6 3.6-3.0 1.2 3.2 3.6-1.6 1.4-3.2-3.6-1.6 2.6z" fill="#f4f0ff" stroke="#7a5cc8" stroke-width="1.2" stroke-linejoin="round"/>
<path d="M378.3 28.4c0.9-0.5 1.8 0.3 2.5 1.2l0.3-3.6c0-1.3 0.1-2.2 0.9-2.3 0.9-0.1 1.1 0.9 1.1 2.1l0.2-1.6c0.1-1 0.6-1.4 1.2-1.4 0.8 0 1.1 0.6 1.1 1.5l0.1 1.6 0.2-1c0.1-0.8 0.5-1.2 1.1-1.1 0.7 0.1 0.9 0.7 0.9 1.5l0 1.8 0.2-0.6c0.2-0.6 0.6-0.8 1-0.7 0.5 0.2 0.6 0.7 0.6 1.3 0 2.4-0.2 4.4-1.2 6.2-0.5 0.9-1.2 1.3-2.3 1.3h-2.6c-1.2 0-1.9-0.6-2.7-1.7l-2.4-3.3c-0.5-0.7-0.4-1 -0.2-1.2z" fill="#fffaf0" stroke="#e0a656" stroke-width="1.2" stroke-linejoin="round"/>
<path d="M396.4 34.0l1.2-3.6 7.2-6.6c1.0-0.8 3.0 1.2 2.2 2.2l-7.0 6.8z" fill="#f6c074" stroke="#e6a040" stroke-width="0.9" stroke-linejoin="round"/>
<path d="M399.0 31.4l6.4-6.2" stroke="#fde6c0" stroke-width="1.0"/>
<path d="M396.4 34.0l0.7-2.0 1.3 1.3z" fill="#a87838"/>
<path d="M419.2 31.0l3.2-2.6 3.0 2.8-2.8 3.0z" fill="#1c3888"/>
<path d="M414.4 34.0l1.4-3.8 7.2-6.6c1.2-0.9 3.4 1.4 2.4 2.6l-7.0 6.6z" fill="#6aa0ee" stroke="#3c7ce0" stroke-width="1.0" stroke-linejoin="round"/>
<path d="M417.4 31.2l6.2-5.8" stroke="#d4e4ff" stroke-width="1.1"/>
<rect x="438.6" y="24.4" width="10.2" height="9.8" fill="#e4e6ee"/>
<path d="M438.4 24.2V34.3H449" stroke="#666a78" stroke-width="0.8" fill="none"/>
<path d="M440.6 34V30M442.9 34V25.4M445.2 34V27M447.4 34V30.6" stroke="#2080ff" stroke-width="1.5"/>
<path d="M451.0 28.2h4.6l-2.3 2.4z" fill="#111"/>
<rect x="460.8" y="24.4" width="10.0" height="9.8" fill="#e4e6ee"/>
<path d="M460.6 24.2V34.3H471" stroke="#666a78" stroke-width="0.8" fill="none"/>
<path d="M462.8 34V30M465.0 34V25.4M467.3 34V27M469.5 34V30.6" stroke="#2080ff" stroke-width="1.5"/>
<path d="M461.6 25.6L469.8 33.2M469.8 25.6L461.6 33.2" stroke="#f03040" stroke-width="1.2"/>
<path d="M486.2 25.4a4.3 4.3 0 1 0 5.2 6.0" stroke="#2894e4" stroke-width="2.2" fill="none"/>
<path d="M484.0 23.4h4.6v4.4z" fill="#2070e8"/>
<text x="488.6" y="31.6" font-size="6.6" font-weight="bold" fill="#2894e4" font-family="'Liberation Sans',sans-serif" stroke="#2894e4" stroke-width="0.3">R</text>
<path d="M1002.0 33.6L1006.6 29.0" stroke="#5858f4" stroke-width="2.7" stroke-linecap="round"/>
<path d="M1011.2 23.2c-1.6-0.6-3.6 0-4.4 1.6-0.8 1.6-0.2 3.4 1.2 4.2 1.6 0.9 3.8 0.4 4.6-1.2 0.3-0.6 0.4-1.0 0.4-1.6l-2.2 1.2-1.6-1.2 0.2-1.8z" fill="#c8c8ff" stroke="#8080f6" stroke-width="1.1" stroke-linejoin="round"/>
<path d="M957.4 6.6h7.6v7.4h-7.6z" fill="#e6e6e6" stroke="#a8a8a8" stroke-width="0.9"/>
<path d="M960.2 9.2h8.0v6.6h-8.0z" fill="#dedede" stroke="#7c7c7c" stroke-width="1.1"/>
<path d="M978.4 14.2h4.6" stroke="#666" stroke-width="1.6"/>
<path d="M994.2 9.0h5.8v5.6h-5.8z" fill="none" stroke="#666" stroke-width="1.1"/><path d="M994.2 9.2h5.8" stroke="#666" stroke-width="1.6"/>
<path d="M1009.6 8.6l6.0 6.0M1015.6 8.6l-6.0 6.0" stroke="#666" stroke-width="1.3"/>
</svg>
</body></html>
